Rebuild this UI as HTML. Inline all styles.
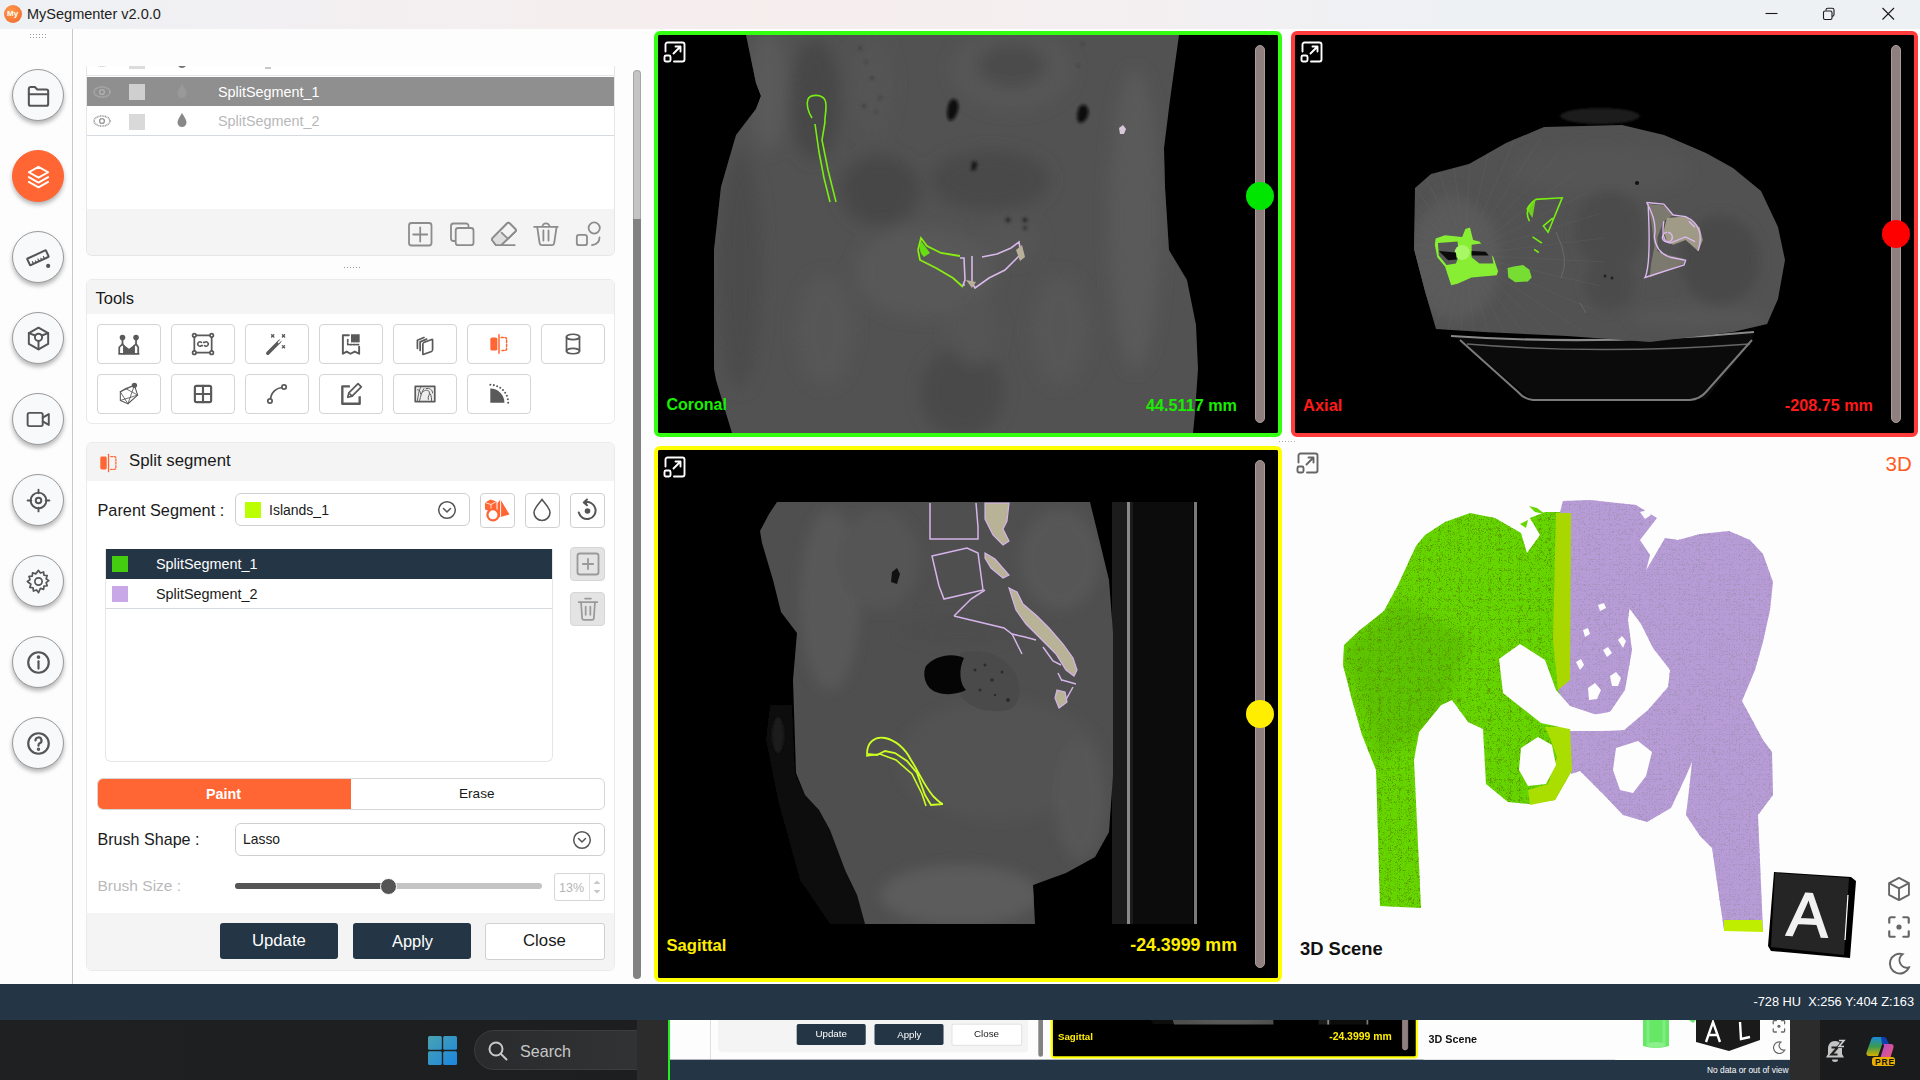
<!DOCTYPE html>
<html><head><meta charset="utf-8">
<style>
*{box-sizing:border-box;margin:0;padding:0}
html,body{width:1920px;height:1080px;overflow:hidden;background:#fff;font-family:"Liberation Sans",sans-serif}
.abs{position:absolute}
#app{position:absolute;left:0;top:0;width:1920px;height:1020px;background:#fdfdfd;overflow:hidden}
#title,.t_title{position:absolute;left:0;top:0;width:1920px;height:29px;background:linear-gradient(90deg,#eef1f4 0%,#f3eff1 20%,#f6eded 40%,#f3eff1 60%,#eef1f4 75%,#eef1f4 100%)}
#sidebar,.t_sidebar{position:absolute;left:0;top:29px;width:73px;height:955px;background:#fdfdfd;border-right:1px solid #c9c9c9}
.sbtn{position:absolute;left:12px;width:52px;height:52px;border-radius:50%;background:#f8f9fb;border:1px solid #9a9a9a;box-shadow:0 3px 4px rgba(0,0,0,.28)}
.sbtn svg{position:absolute;left:11px;top:11px}
.sbtn.on{background:#ff6633;border-color:#ff6633}
#status,.t_status{position:absolute;left:0;top:984px;width:1920px;height:36px;background:#243545}
.vp{position:absolute;background:#000;border:4px solid;border-radius:6px;overflow:hidden}
.panel{position:absolute;left:86px;width:529px;background:#fff;border:1px solid #ececec;border-radius:6px;overflow:hidden}
.phead{position:absolute;left:0;top:0;width:100%;background:#f4f4f4}
.tbtn{position:absolute;width:64px;height:40px;border:1px solid #d4d4d4;border-radius:4px;background:#fff}
.tbtn svg{position:absolute;left:20px;top:8px}
.txt{position:absolute;white-space:nowrap;line-height:1}
</style></head>
<body>
<div id="app">
  <div id="title">
    <div class="abs" style="left:4px;top:5px;width:18px;height:18px;border-radius:50%;background:radial-gradient(circle at 40% 35%,#ff9a4a,#f0632a)"></div>
    <div class="txt" style="left:7px;top:10px;font-size:8px;font-weight:bold;color:#fff">My</div>
    <div class="txt" style="left:27px;top:7px;font-size:14.5px;color:#222">MySegmenter v2.0.0</div>
    <svg class="abs" style="left:1760px;top:4px" width="140" height="22" viewBox="1760 4 140 22" fill="none" stroke="#1a1a1a" stroke-width="1.1"><path d="M1765.5 13.5H1777.5"/><rect x="1823.5" y="11" width="8.5" height="8.5" rx="1.5"/><path d="M1826 10.5V10a1.8 1.8 0 0 1 1.8-1.8h4.4a1.8 1.8 0 0 1 1.8 1.8v4.4a1.8 1.8 0 0 1-1.8 1.8H1832"/><path d="M1882.5 8L1894 19.5M1894 8L1882.5 19.5"/></svg>
  </div>
  <div id="sidebar"><div class="abs" style="left:29px;top:4px;width:18px;height:6px;background-image:radial-gradient(circle,#999 0.6px,transparent 0.9px);background-size:3px 3px"></div><div class="sbtn" style="top:40px"><svg width="29" height="29" viewBox="0 0 24 24" fill="none" stroke="#555" stroke-width="1.7" stroke-linecap="round" stroke-linejoin="round"><path d="M4 9V6.5a1.5 1.5 0 0 1 1.5-1.5H9l2 2h7.5A1.5 1.5 0 0 1 20 8.5V19a1.5 1.5 0 0 1-1.5 1.5h-13A1.5 1.5 0 0 1 4 19z"/><path d="M4 11h16"/></svg></div><div class="sbtn on" style="top:121px"><svg width="29" height="29" viewBox="0 0 24 24" fill="none" stroke="#fff" stroke-width="1.6" stroke-linecap="round" stroke-linejoin="round"><path d="M12 4l8 4.5-8 4.5-8-4.5z"/><path d="M4 12.5l8 4.5 8-4.5"/><path d="M4 16.5l8 4.5 8-4.5"/></svg></div><div class="sbtn" style="top:202px"><svg width="29" height="29" viewBox="0 0 24 24" fill="none" stroke="#555" stroke-width="1.7" stroke-linecap="round" stroke-linejoin="round"><g transform="rotate(-25 12 12)"><rect x="3" y="9" width="17" height="6" rx="0.5"/><path d="M6 15v-2M8.5 15v-1.5M11 15v-2M13.5 15v-1.5M16 15v-2" stroke-width="1"/></g><circle cx="20" cy="19" r="0.9" fill="#555"/></svg></div><div class="sbtn" style="top:283px"><svg width="29" height="29" viewBox="0 0 24 24" fill="none" stroke="#555" stroke-width="1.6" stroke-linecap="round" stroke-linejoin="round"><path d="M12 3l8 4.5v9L12 21l-8-4.5v-9z"/><circle cx="12" cy="11" r="3"/><path d="M12 14v7M4 7.5l5.3 2M20 7.5l-5.3 2"/></svg></div><div class="sbtn" style="top:364px"><svg width="29" height="29" viewBox="0 0 24 24" fill="none" stroke="#555" stroke-width="1.6" stroke-linecap="round" stroke-linejoin="round"><rect x="3" y="6.5" width="12.5" height="11" rx="1.5"/><path d="M15.5 10.5l5-3v9l-5-3"/></svg></div><div class="sbtn" style="top:445px"><svg width="29" height="29" viewBox="0 0 24 24" fill="none" stroke="#555" stroke-width="1.6" stroke-linecap="round" stroke-linejoin="round"><circle cx="12" cy="12" r="6.5"/><circle cx="12" cy="12" r="2.3"/><path d="M12 3v3M12 18v3M3 12h3M18 12h3"/></svg></div><div class="sbtn" style="top:526px"><svg width="29" height="29" viewBox="0 0 24 24" fill="none" stroke="#555" stroke-width="1.4" stroke-linecap="round" stroke-linejoin="round"><circle cx="12" cy="12" r="3"/><path d="M12 2.8l1.6 2.2 2.6-.9.3 2.7 2.7.3-.9 2.6 2.2 1.6-2.2 1.6.9 2.6-2.7.3-.3 2.7-2.6-.9L12 21.2l-1.6-2.2-2.6.9-.3-2.7-2.7-.3.9-2.6L2.8 12 5 10.4l-.9-2.6 2.7-.3.3-2.7 2.6.9z"/></svg></div><div class="sbtn" style="top:607px"><svg width="29" height="29" viewBox="0 0 24 24" fill="none" stroke="#555" stroke-width="1.8" stroke-linecap="round" stroke-linejoin="round"><circle cx="12" cy="12" r="8.5"/><path d="M12 11v6"/><circle cx="12" cy="7.6" r="0.6" fill="#555"/></svg></div><div class="sbtn" style="top:688px"><svg width="29" height="29" viewBox="0 0 24 24" fill="none" stroke="#555" stroke-width="1.8" stroke-linecap="round" stroke-linejoin="round"><circle cx="12" cy="12" r="8.5"/><path d="M9.5 9.5a2.5 2.5 0 1 1 3.5 2.3c-.7.3-1 .8-1 1.5v.5"/><circle cx="12" cy="16.8" r="0.5" fill="#555"/></svg></div></div>
<div class="abs" style="left:86px;top:66px;width:529px;height:190px;border:1px solid #e6e6e6;border-top:none;border-radius:0 0 6px 6px;background:#fff;overflow:hidden">
<div class="abs" style="left:0;top:-20px;width:528px;height:30px;background:#fff;border-bottom:1px solid #e3e6ea"><div class="abs" style="left:5px;top:8px;"><svg width="20" height="14" viewBox="0 0 20 14"><ellipse cx="10" cy="7" rx="8" ry="5" fill="none" stroke="#bbb" stroke-width="1.6" stroke-dasharray="1 0.6"/><circle cx="10" cy="7" r="2.4" fill="none" stroke="#bbb" stroke-width="1.4"/></svg></div><div class="abs" style="left:42px;top:7px;width:16px;height:16px;background:#dcdcdc"></div><div class="abs" style="left:89px;top:7px"><svg width="12" height="16" viewBox="0 0 12 16"><path d="M6 1C4 4.5 1.5 7.5 1.5 10.5a4.5 4.5 0 0 0 9 0C10.5 7.5 8 4.5 6 1z" fill="#777"/></svg></div><div class="abs" style="left:178px;top:21px;width:6px;height:2px;background:#c8c8c8"></div></div>
<div class="abs" style="left:0;top:11px;width:528px;height:29px;background:#8f8f8f"><div class="abs" style="left:5px;top:8px"><svg width="20" height="14" viewBox="0 0 20 14"><ellipse cx="10" cy="7" rx="8" ry="5" fill="none" stroke="#b0b0b0" stroke-width="1.6" stroke-dasharray="1 0.6"/><circle cx="10" cy="7" r="2.4" fill="none" stroke="#b0b0b0" stroke-width="1.4"/></svg></div><div class="abs" style="left:42px;top:7px;width:16px;height:16px;background:#cfcfcf"></div><div class="abs" style="left:89px;top:6px"><svg width="12" height="16" viewBox="0 0 12 16"><path d="M6 1C4 4.5 1.5 7.5 1.5 10.5a4.5 4.5 0 0 0 9 0C10.5 7.5 8 4.5 6 1z" fill="#999"/></svg></div><div class="txt" style="left:131px;top:7.5px;font-size:14.4px;color:#fff">SplitSegment_1</div></div>
<div class="abs" style="left:0;top:40px;width:528px;height:30px;background:#fff;border-bottom:1px solid #d5dae0"><div class="abs" style="left:5px;top:8px"><svg width="20" height="14" viewBox="0 0 20 14"><ellipse cx="10" cy="7" rx="8" ry="5" fill="none" stroke="#999" stroke-width="1.6" stroke-dasharray="1 0.6"/><circle cx="10" cy="7" r="2.4" fill="none" stroke="#999" stroke-width="1.4"/></svg></div><div class="abs" style="left:42px;top:8px;width:16px;height:16px;background:#d9d9d9"></div><div class="abs" style="left:89px;top:6px"><svg width="12" height="16" viewBox="0 0 12 16"><path d="M6 1C4 4.5 1.5 7.5 1.5 10.5a4.5 4.5 0 0 0 9 0C10.5 7.5 8 4.5 6 1z" fill="#888"/></svg></div><div class="txt" style="left:131px;top:8px;font-size:14.4px;color:#b8b8b8">SplitSegment_2</div></div>
<div class="abs" style="left:0;top:143px;width:528px;height:47px;background:#f4f4f4"><svg class="abs" style="left:307px;top:0" width="220" height="47" viewBox="394 209 220 47" fill="none" stroke="#8c8c8c" stroke-width="1.8" stroke-linecap="round" stroke-linejoin="round">
<rect x="409" y="223" width="22.5" height="22.5" rx="2.5"/><path d="M420.2 227.5v14M413.2 234.5h14"/>
<path d="M455 241h-1.5a2.5 2.5 0 0 1-2.5-2.5v-12.5a2.5 2.5 0 0 1 2.5-2.5h12.5a2.5 2.5 0 0 1 2.5 2.5v2"/><rect x="455.7" y="228" width="17.8" height="17.2" rx="2.5"/>
<path d="M496 245.2L492.4 240.5Q491.5 239 492.7 237.8L507 223.3Q508.4 222 509.8 223.3L515.3 228.8Q516.6 230.2 515.3 231.6L501.2 245.2Z" />
<path d="M492.7 237.8L501.6 232.6 507 237.8 499.5 245.2H496L492.4 240.5Z" fill="#dedede" stroke="none"/>
<path d="M496 245.2L492.4 240.5Q491.5 239 492.7 237.8L507 223.3Q508.4 222 509.8 223.3L515.3 228.8Q516.6 230.2 515.3 231.6L501.2 245.2ZM501.6 232.6L507 237.8M497 245.2H514.7"/>
<path d="M534.2 226.9H557.7M542.4 226.9a3.6 3.6 0 0 1 7.2 0M537.2 226.9L539.6 243a2.5 2.5 0 0 0 2.5 2.2h9.6a2.5 2.5 0 0 0 2.5-2.2L556.6 226.9M543.4 230.5v10M548.5 230.5v10"/>
<circle cx="594.2" cy="228" r="5.6"/><rect x="576.8" y="234.9" width="10.2" height="10.3" rx="2.3"/><path d="M599.5 237.5Q599.5 244 592 245.2"/>
</svg></div>
</div>
<div class="abs" style="left:343px;top:266px;width:18px;height:3px;background-image:radial-gradient(circle,#999 0.6px,transparent 0.9px);background-size:3px 3px"></div>
<div class="abs" style="left:633px;top:70px;width:8px;height:150px;background:#c4c4c4;border:1px solid #a6a6a6;border-bottom:none;border-radius:4px 4px 0 0"></div>
<div class="abs" style="left:633px;top:219px;width:8px;height:760px;background:#828282;border-radius:0 0 4px 4px"></div>
<div class="abs" style="left:86px;top:279px;width:529px;height:145px;border:1px solid #eaeaea;border-radius:6px;background:#fff;overflow:hidden">
<div class="abs" style="left:0;top:0;width:527px;height:34px;background:#f4f4f4"></div>
<div class="txt" style="left:8.5px;top:9.5px;font-size:16.5px;color:#1a1a1a">Tools</div>
<div class="tbtn" style="left:10px;top:44px"><svg style="position:absolute;left:18px;top:6px" width="26" height="26" viewBox="0 0 24 24" fill="none" stroke="#5a5a5a" stroke-width="1.6" stroke-linecap="round" stroke-linejoin="round"><path d="M3 21v-6l3-3 1.5 2V21z" fill="none"/><path d="M7.5 14L12 17.5 16.5 14v7H7.5z" fill="#5a5a5a" stroke="#5a5a5a"/><path d="M16.5 14l2-2 2 3v6h-4z"/><path d="M6 12V7M18.5 12V7" /><circle cx="6" cy="6" r="1.8" fill="#5a5a5a"/><circle cx="18.5" cy="6" r="1.8" fill="#5a5a5a"/><path d="M3 21h18"/></svg></div>
<div class="tbtn" style="left:84px;top:44px"><svg style="position:absolute;left:18px;top:6px" width="26" height="26" viewBox="0 0 24 24" fill="none" stroke="#5a5a5a" stroke-width="1.6" stroke-linecap="round" stroke-linejoin="round"><rect x="4" y="4" width="16" height="16"/><circle cx="4" cy="4" r="1.6" fill="#fff"/><circle cx="20" cy="4" r="1.6" fill="#fff"/><circle cx="4" cy="20" r="1.6" fill="#fff"/><circle cx="20" cy="20" r="1.6" fill="#fff"/><path d="M10.5 10.5a2 2 0 1 0 0 3h1M13.5 13.5a2 2 0 1 0 0-3h-1" stroke-width="1.4"/></svg></div>
<div class="tbtn" style="left:158px;top:44px"><svg style="position:absolute;left:18px;top:6px" width="26" height="26" viewBox="0 0 24 24" fill="none" stroke="#5a5a5a" stroke-width="1.6" stroke-linecap="round" stroke-linejoin="round"><path d="M3.5 20.5l11-11" stroke-width="3.2"/><path d="M13.5 10.5l2-2" stroke="#fff" stroke-width="1.4"/><path d="M7 3.5l2 2M9 3.5l-2 2M17 3.5l2 2M19 3.5l-2 2M17 13.5l2 2M19 13.5l-2 2" stroke-width="1.3"/></svg></div>
<div class="tbtn" style="left:232px;top:44px"><svg style="position:absolute;left:18px;top:6px" width="26" height="26" viewBox="0 0 24 24" fill="none" stroke="#5a5a5a" stroke-width="1.6" stroke-linecap="round" stroke-linejoin="round"><rect x="12" y="3" width="8" height="7.5" fill="#5a5a5a" stroke="none"/><path d="M10 4H4.5v17l3.5-2 3.5 2 4-2 4 2v-6.5" stroke-width="1.8"/><path d="M9 8v4.5h10" stroke-dasharray="1.8 1.4" stroke-width="1.6"/></svg></div>
<div class="tbtn" style="left:306px;top:44px"><svg style="position:absolute;left:18px;top:6px" width="26" height="26" viewBox="0 0 24 24" fill="none" stroke="#5a5a5a" stroke-width="1.6" stroke-linecap="round" stroke-linejoin="round"><path d="M5 16V8.5l6-2.5"/><path d="M7.5 18V10l6-2.5"/><rect x="10" y="9.5" width="9" height="11" rx="1.2" transform="skewY(-20) translate(0 5)"/></svg></div>
<div class="tbtn" style="left:380px;top:44px"><svg style="position:absolute;left:18px;top:6px" width="26" height="26" viewBox="0 0 24 24" fill="none" stroke="#5a5a5a" stroke-width="1.6" stroke-linecap="round" stroke-linejoin="round"><rect x="4" y="6" width="6.5" height="12" rx="1.5" fill="#ff6633" stroke="none"/><path d="M12 3.5v17" stroke="#ff6633" stroke-width="1.4"/><path d="M14 6h3.5a1.5 1.5 0 0 1 1.5 1.5v9a1.5 1.5 0 0 1-1.5 1.5H14" stroke="#ff6633" stroke-width="1.4" stroke-dasharray="2 1.5"/></svg></div>
<div class="tbtn" style="left:454px;top:44px"><svg style="position:absolute;left:18px;top:6px" width="26" height="26" viewBox="0 0 24 24" fill="none" stroke="#5a5a5a" stroke-width="1.6" stroke-linecap="round" stroke-linejoin="round"><ellipse cx="12" cy="5.5" rx="6" ry="2.5"/><ellipse cx="12" cy="18.5" rx="6" ry="2.5"/><path d="M6 5.5v13M18 5.5v13"/></svg></div>
<div class="tbtn" style="left:10px;top:94px"><svg style="position:absolute;left:18px;top:6px" width="26" height="26" viewBox="0 0 24 24" fill="none" stroke="#5a5a5a" stroke-width="1.6" stroke-linecap="round" stroke-linejoin="round"><path d="M4 10l5-3 8-3 3 9-9 8-7-3z" stroke-width="1"/><path d="M4 10l13-6M9 7l11 6M4 18l16-5M11 21l6-17M4 10l7 11" stroke-width="0.8"/><circle cx="17" cy="4" r="1.7" fill="#5a5a5a"/></svg></div>
<div class="tbtn" style="left:84px;top:94px"><svg style="position:absolute;left:18px;top:6px" width="26" height="26" viewBox="0 0 24 24" fill="none" stroke="#5a5a5a" stroke-width="1.6" stroke-linecap="round" stroke-linejoin="round"><rect x="4.5" y="4.5" width="15" height="15" rx="1.5" stroke-width="2"/><path d="M12 4.5v15M4.5 12h15" stroke-width="2"/></svg></div>
<div class="tbtn" style="left:158px;top:94px"><svg style="position:absolute;left:18px;top:6px" width="26" height="26" viewBox="0 0 24 24" fill="none" stroke="#5a5a5a" stroke-width="1.6" stroke-linecap="round" stroke-linejoin="round"><path d="M6 18C6 11 11 6 18 6"/><circle cx="5.5" cy="18.5" r="2" fill="#fff"/><circle cx="18.5" cy="5.5" r="2" fill="#fff"/></svg></div>
<div class="tbtn" style="left:232px;top:94px"><svg style="position:absolute;left:18px;top:6px" width="26" height="26" viewBox="0 0 24 24" fill="none" stroke="#5a5a5a" stroke-width="1.6" stroke-linecap="round" stroke-linejoin="round"><path d="M11 5H4v16h16v-7" stroke-width="2.2" stroke-linecap="butt"/><path d="M9 15l1-4 8.5-8.5 3 3L13 14z"/><path d="M11 12l2 2"/></svg></div>
<div class="tbtn" style="left:306px;top:94px"><svg style="position:absolute;left:18px;top:6px" width="26" height="26" viewBox="0 0 24 24" fill="none" stroke="#5a5a5a" stroke-width="1.6" stroke-linecap="round" stroke-linejoin="round"><rect x="3" y="5" width="18" height="14" fill="#eee" stroke="#5a5a5a" stroke-width="1.6"/><path d="M5 18c1-5 1-9 3-12M7 18c1-4 2-8 4-11M13 7c3-1 6 1 6 4M10 10c2-2 5-2 6 0 1 3-2 4-1 7M17 12c1 2 1 4 1 6M5 8c2 0 3 2 3 4" stroke-width="0.9"/></svg></div>
<div class="tbtn" style="left:380px;top:94px"><svg style="position:absolute;left:18px;top:6px" width="26" height="26" viewBox="0 0 24 24" fill="none" stroke="#5a5a5a" stroke-width="1.6" stroke-linecap="round" stroke-linejoin="round"><path d="M4 7a13 13 0 0 1 13 13H4z" fill="#5a5a5a" stroke="none"/><circle cx="4.00" cy="3.50" r="0.95" fill="#5a5a5a" stroke="none"/><circle cx="7.22" cy="3.82" r="0.95" fill="#5a5a5a" stroke="none"/><circle cx="10.31" cy="4.76" r="0.95" fill="#5a5a5a" stroke="none"/><circle cx="13.17" cy="6.28" r="0.95" fill="#5a5a5a" stroke="none"/><circle cx="15.67" cy="8.33" r="0.95" fill="#5a5a5a" stroke="none"/><circle cx="17.72" cy="10.83" r="0.95" fill="#5a5a5a" stroke="none"/><circle cx="19.24" cy="13.69" r="0.95" fill="#5a5a5a" stroke="none"/><circle cx="20.18" cy="16.78" r="0.95" fill="#5a5a5a" stroke="none"/><circle cx="20.50" cy="20.00" r="0.95" fill="#5a5a5a" stroke="none"/></svg></div>
</div>
<div class="abs" style="left:86px;top:442px;width:529px;height:529px;border:1px solid #eaeaea;border-radius:6px;background:#fff;overflow:hidden">
<div class="abs" style="left:0;top:0;width:527px;height:38px;background:#f4f4f4"></div>
<svg class="abs" style="left:11px;top:9px" width="22" height="22" viewBox="0 0 24 24" fill="none" stroke-linecap="round"><rect x="2.5" y="5" width="7" height="14" rx="1.5" fill="#ff6633"/><path d="M11.5 2.5v19" stroke="#ff6633" stroke-width="1.4"/><path d="M14 5h4a1.5 1.5 0 0 1 1.5 1.5v11A1.5 1.5 0 0 1 18 19h-4" stroke="#ff6633" stroke-width="1.4" stroke-dasharray="2 1.6"/></svg>
<div class="txt" style="left:42px;top:10px;font-size:16.8px;color:#1a1a1a">Split segment</div>
<div class="txt" style="left:10.5px;top:59px;font-size:16.3px;color:#1a1a1a">Parent Segment :</div>
<div class="abs" style="left:148px;top:50px;width:235px;height:33px;border:1px solid #cfcfcf;border-radius:6px;background:#fff"><div class="abs" style="left:9px;top:8px;width:16px;height:16px;background:#bbff00"></div><div class="txt" style="left:33px;top:9px;font-size:14px;color:#1a1a1a">Islands_1</div><div class="abs" style="left:201px;top:6px"><svg width="20" height="20" viewBox="0 0 20 20" fill="none" stroke="#555" stroke-width="1.5" stroke-linecap="round" stroke-linejoin="round"><circle cx="10" cy="10" r="8.3"/><path d="M6.5 8.5L10 12l3.5-3.5"/></svg></div></div>
<div class="abs" style="left:393px;top:50px;width:35px;height:35px;border:1px solid #d0d0d0;border-radius:4px;background:#fff;overflow:hidden"><div class="abs" style="left:-1px;top:-1px"><svg width="35" height="35" viewBox="0 0 35 35"><path d="M5 9.5L10.5 6.5 16.5 8.5V16L11 18.5 5 16.5z" fill="#ff6633"/><path d="M5 9.5L11 11.5 16.5 8.5M11 11.5V18.5" stroke="#fff" stroke-width="0.8" fill="none"/><path d="M20.5 6.5L29.5 21.5 20.5 24z" fill="#ff6633"/><path d="M17.5 10L20.5 6.5V24L17.5 24.5z" fill="#ff6633"/><path d="M20.6 7V24" stroke="#fff" stroke-width="0.9"/><circle cx="13" cy="21.8" r="5.6" fill="#fff" stroke="#ff6633" stroke-width="2.3"/></svg></div></div>
<div class="abs" style="left:438px;top:50px;width:35px;height:35px;border:1px solid #d0d0d0;border-radius:4px;background:#fff;overflow:hidden"><div class="abs" style="left:-1px;top:-1px"><svg width="35" height="35" viewBox="0 0 35 35" fill="none" stroke="#555" stroke-width="1.6"><path d="M17 6.5C14 10.5 9 15 9 19.5a8 8 0 0 0 16 0C25 15 20 10.5 17 6.5z"/></svg></div></div>
<div class="abs" style="left:483px;top:50px;width:35px;height:35px;border:1px solid #d0d0d0;border-radius:4px;background:#fff;overflow:hidden"><div class="abs" style="left:-1px;top:-1px"><svg width="35" height="35" viewBox="0 0 35 35" fill="none" stroke="#555" stroke-width="2" stroke-linecap="round"><path d="M8.8 19.5A8.5 8.5 0 1 0 15 9.3"/><path d="M17 6.5L13.8 9.5 17 12.3" fill="#555" stroke-linejoin="round"/><circle cx="17.5" cy="18" r="2.8" fill="#555" stroke="none"/></svg></div></div>
<div class="abs" style="left:18px;top:106px;width:448px;height:213px;border:1px solid #e6e6e6;border-top:none;border-radius:0 0 6px 6px;background:#fff;overflow:hidden">
<div class="abs" style="left:0;top:0;width:447px;height:30px;background:#243545"><div class="abs" style="left:6px;top:7px;width:16px;height:16px;background:#44cc11"></div><div class="txt" style="left:50px;top:7.5px;font-size:14.4px;color:#fff">SplitSegment_1</div></div>
<div class="abs" style="left:0;top:30px;width:447px;height:30px;background:#fff;border-bottom:1px solid #d5dae0"><div class="abs" style="left:6px;top:7px;width:16px;height:16px;background:#c8a8e6"></div><div class="txt" style="left:50px;top:8px;font-size:14.4px;color:#1a1a1a">SplitSegment_2</div></div>
</div>
<div class="abs" style="left:483px;top:104px;width:35px;height:34px;border:1px solid #d6d6d6;border-radius:4px;background:#e4e4e4;display:flex;align-items:center;justify-content:center"><svg width="28" height="28" viewBox="0 0 24 24" fill="none" stroke="#9a9a9a" stroke-width="1.6"><rect x="3" y="3" width="18" height="18" rx="2"/><path d="M12 7v10M7 12h10"/></svg></div>
<div class="abs" style="left:483px;top:149px;width:35px;height:34px;border:1px solid #d6d6d6;border-radius:4px;background:#e4e4e4;display:flex;align-items:center;justify-content:center"><svg width="28" height="28" viewBox="0 0 24 24" fill="none" stroke="#9a9a9a" stroke-width="1.5" stroke-linecap="round"><path d="M4 6h16M9.5 3h5M6 6l1 14a1.5 1.5 0 0 0 1.5 1.3h7A1.5 1.5 0 0 0 17 20l1-14M10 10v7M14 10v7"/></svg></div>
<div class="abs" style="left:10px;top:335px;width:508px;height:32px;border:1px solid #d6d6d6;border-radius:6px;background:#fff;overflow:hidden"><div class="abs" style="left:0;top:0;width:253px;height:30px;background:#ff6633"></div><div class="txt" style="left:108px;top:8px;font-size:14.3px;font-weight:bold;color:#fff">Paint</div><div class="txt" style="left:361px;top:8px;font-size:13.6px;color:#1a1a1a">Erase</div></div>
<div class="txt" style="left:10.5px;top:388px;font-size:16.1px;color:#1a1a1a">Brush Shape :</div>
<div class="abs" style="left:148px;top:380px;width:370px;height:33px;border:1px solid #cfcfcf;border-radius:6px;background:#fff"><div class="txt" style="left:7px;top:9px;font-size:13.9px;color:#1a1a1a">Lasso</div><div class="abs" style="left:336px;top:6px"><svg width="20" height="20" viewBox="0 0 20 20" fill="none" stroke="#555" stroke-width="1.5" stroke-linecap="round" stroke-linejoin="round"><circle cx="10" cy="10" r="8.3"/><path d="M6.5 8.5L10 12l3.5-3.5"/></svg></div></div>
<div class="txt" style="left:10.5px;top:435px;font-size:15.5px;color:#b9b9b9">Brush Size :</div>
<div class="abs" style="left:148px;top:440px;width:307px;height:6px;border-radius:3px;background:#c4c4c4"></div><div class="abs" style="left:148px;top:440px;width:154px;height:6px;border-radius:3px;background:#555"></div><div class="abs" style="left:294px;top:436px;width:15px;height:15px;border-radius:50%;background:#555;border:1.5px solid #fff;box-sizing:content-box;margin:-1.5px"></div>
<div class="abs" style="left:467px;top:430px;width:51px;height:28px;border:1px solid #d6d6d6;border-radius:3px;background:#fff"><div class="txt" style="left:4px;top:8px;font-size:12.5px;color:#b5b5b5">13%</div><div class="abs" style="left:34px;top:0;width:1px;height:26px;background:#e0e0e0"></div><svg class="abs" style="left:37px;top:3px" width="10" height="20" viewBox="0 0 10 20"><path d="M1.5 7L5 3.5 8.5 7z M1.5 13L5 16.5 8.5 13z" fill="#c8c8c8"/></svg></div>
<div class="abs" style="left:0;top:470px;width:527px;height:59px;background:#f4f4f4"></div>
<div class="abs" style="left:133px;top:480px;width:118px;height:36px;border-radius:3px;background:#243545"></div><div class="txt" style="left:165px;top:490px;font-size:16.7px;color:#fff">Update</div>
<div class="abs" style="left:266px;top:480px;width:118px;height:36px;border-radius:3px;background:#243545"></div><div class="txt" style="left:305px;top:490px;font-size:16.4px;color:#fff">Apply</div>
<div class="abs" style="left:398px;top:480px;width:120px;height:37px;border:1px solid #d0d0d0;border-radius:3px;background:#fff"></div><div class="txt" style="left:436px;top:490px;font-size:16.8px;color:#1a1a1a">Close</div>
</div>
  <div id="status">
    <div class="txt" style="right:6px;top:12px;font-size:12.8px;color:#fff">-728 HU&nbsp; X:256 Y:404 Z:163</div>
  </div>
  <!-- viewports -->
  <div class="abs" style="left:1278px;top:440px;width:18px;height:3px;background-image:radial-gradient(circle,#aaa 0.6px,transparent 0.9px);background-size:3px 3px"></div>
  <div class="vp" id="vpC" style="left:654px;top:31px;width:628px;height:406px;border-color:#33ff11"><svg class="abs" style="left:0;top:0" width="620" height="398" viewBox="658 35 620 398">
<defs>
<filter id="bl4" x="-50%" y="-50%" width="200%" height="200%"><feGaussianBlur stdDeviation="4"/></filter>
<filter id="bl8" x="-50%" y="-50%" width="200%" height="200%"><feGaussianBlur stdDeviation="8"/></filter>
<filter id="bl2" x="-50%" y="-50%" width="200%" height="200%"><feGaussianBlur stdDeviation="1.5"/></filter>
<clipPath id="cBody"><path d="M746 35H1179L1170 100L1164 148L1165 187L1169 250L1187 280L1196 325L1198 369L1195 413L1193 433H732L725 410L716 380L714 369L714 250L721 187L736 135L756 109L761 96L756 83Z"/></clipPath>
</defs>
<rect x="658" y="35" width="620" height="398" fill="#000"/>
<path d="M746 35H1179L1170 100L1164 148L1165 187L1169 250L1187 280L1196 325L1198 369L1195 413L1193 433H732L725 410L716 380L714 369L714 250L721 187L736 135L756 109L761 96L756 83Z" fill="#525252"/>
<g clip-path="url(#cBody)">
 <g filter="url(#bl8)">
  <ellipse cx="768" cy="90" rx="20" ry="60" fill="#5a5a5a"/>
  <ellipse cx="815" cy="100" rx="25" ry="60" fill="#474747"/>
  <ellipse cx="872" cy="85" rx="20" ry="50" fill="#555"/>
  <ellipse cx="1012" cy="70" rx="60" ry="40" fill="#575757"/>
  <ellipse cx="1012" cy="65" rx="35" ry="22" fill="#4c4c4c"/>
  <ellipse cx="1135" cy="220" rx="25" ry="150" fill="#5a5a5a"/>
  <ellipse cx="740" cy="270" rx="22" ry="120" fill="#4c4c4c"/>
  <ellipse cx="880" cy="190" rx="40" ry="35" fill="#474747"/>
  <ellipse cx="990" cy="180" rx="60" ry="30" fill="#4a4a4a"/>
  <ellipse cx="925" cy="272" rx="70" ry="45" fill="#585858"/>
  <ellipse cx="825" cy="330" rx="28" ry="55" fill="#575757"/>
  <ellipse cx="1060" cy="330" rx="28" ry="55" fill="#565656"/>
  <ellipse cx="962" cy="392" rx="42" ry="45" fill="#494949"/><ellipse cx="968" cy="330" rx="18" ry="28" fill="#595959"/>
  <ellipse cx="975" cy="330" rx="22" ry="35" fill="#555"/>
  <ellipse cx="1010" cy="240" rx="30" ry="20" fill="#555"/>
 </g>
<g filter="url(#bl2)">
  <path d="M951 100c4-3 9 2 7 10s-6 12-9 10-2-16 2-20z" fill="#0a0a0a"/>
  <path d="M1080 106c5-4 10 2 8 9s-8 10-10 6 0-12 2-15z" fill="#0a0a0a"/>
  <path d="M972 162c3-2 6 0 5 4s-4 6-6 4z" fill="#151515"/>
  <circle cx="1008" cy="220" r="2.5" fill="#2a2a2a"/><circle cx="1025" cy="220" r="2.5" fill="#2a2a2a"/><circle cx="1025" cy="228" r="2" fill="#2a2a2a"/>
  <g fill="#3c3c3c"><circle cx="860" cy="48" r="2"/><circle cx="866" cy="62" r="1.5"/><circle cx="872" cy="78" r="2"/><circle cx="864" cy="106" r="2"/><circle cx="876" cy="112" r="1.5"/><circle cx="880" cy="98" r="1.8"/><circle cx="1083" cy="44" r="1.5"/><circle cx="1078" cy="66" r="1.5"/></g>
 </g>
</g>
<!-- segments -->
<path d="M808 99c3-5 14-5 17 1 3 6-1 18 0 22l-3 18 6 30 5 20 3 12M812 118c-4-6-6-14-4-19M815 124l4 28 5 26 6 24" stroke="#77ee11" stroke-width="1.6" fill="none"/>
<path d="M918 250l3-12 6 8 14 7 19 3M918 250l2 10 16 8 17 10 10 9" stroke="#88ee11" stroke-width="1.8" fill="none"/>
<path d="M921 241c-2 5-2 12 3 16l6-4z" fill="#66dd11"/>
<path d="M960 258l4 0 1 22 -2 5 2 0M972 256l0 26 3 6 14-10 16-8 12-12 4-4-2-12-8 6-14 6-15 3" stroke="#d8b8e8" stroke-width="1.6" fill="none"/>
<path d="M1016 250l6-5 3 12-5 4z M966 280l6 8 4-6z" fill="#b8b09a"/>
<path d="M1119 128l4-3 3 4-2 5-4 0z" fill="#d8c8d8"/>
</svg>
<div class="abs" style="left:597px;top:10px;width:10px;height:378px;border-radius:5px;background:#907f7f;border:1px solid #a89c9c"></div>
<div class="abs" style="left:588px;top:147px;width:28px;height:28px;border-radius:50%;background:#00e600"></div>
<div class="txt" style="left:8.5px;top:362px;font-size:16px;font-weight:bold;color:#1aee00">Coronal</div>
<div class="txt" style="right:41px;top:362px;font-size:16.2px;font-weight:bold;color:#1aee00">44.5117 mm</div>
<svg class="abs" style="left:5px;top:5px" width="24" height="24" viewBox="0 0 24 24" fill="none" stroke="#fff" stroke-width="1.9" stroke-linecap="round" stroke-linejoin="round"><path d="M2.5 11.5V4.5a2 2 0 0 1 2-2h15a2 2 0 0 1 2 2v15a2 2 0 0 1-2 2h-8.5"/><rect x="1.5" y="15.5" width="6" height="6" rx="1.5"/><path d="M10.5 13.5l7-7M12.5 6.5h5v5"/></svg></div>
  <div class="vp" id="vpA" style="left:1291px;top:31px;width:627px;height:406px;border-color:#ff3b3b"><svg class="abs" style="left:0;top:0" width="619" height="398" viewBox="1295 35 619 398">
<defs>
<filter id="ab6" x="-50%" y="-50%" width="200%" height="200%"><feGaussianBlur stdDeviation="6"/></filter>
<filter id="ab1" x="-50%" y="-50%" width="200%" height="200%"><feGaussianBlur stdDeviation="1"/></filter>
<clipPath id="aBody"><path d="M1415 188L1431 174L1469 164L1506 143L1544 127L1622 125L1664 135L1706 153L1733 168L1761 191L1778 227L1785 260L1778 299L1767 324L1733 332L1650 342L1567 336L1483 332L1436 329L1425 291L1414 249Z"/></clipPath>
</defs>
<rect x="1295" y="35" width="619" height="398" fill="#000"/>
<ellipse cx="1600" cy="116" rx="40" ry="8" fill="#1a1a1a" filter="url(#ab1)"/>
<path d="M1451 336Q1600 345 1754 332L1752 341L1706 399H1531L1460 340Z" fill="#0b0b0b"/>
<path d="M1451 336Q1600 346 1754 332" stroke="#8a8a8a" stroke-width="2.2" fill="none"/>
<path d="M1467 344Q1600 355 1750 344" stroke="#666" stroke-width="1.5" fill="none"/>
<path d="M1460 340L1518 392Q1524 399 1533 400H1690Q1700 399 1706 392L1752 340" stroke="#7a7a7a" stroke-width="2" fill="none"/>
<path d="M1415 188L1431 174L1469 164L1506 143L1544 127L1622 125L1664 135L1706 153L1733 168L1761 191L1778 227L1785 260L1778 299L1767 324L1733 332L1650 342L1567 336L1483 332L1436 329L1425 291L1414 249Z" fill="#525252"/>
<g clip-path="url(#aBody)">
 <g filter="url(#ab6)">
  <ellipse cx="1600" cy="170" rx="90" ry="25" fill="#555"/>
  <ellipse cx="1610" cy="230" rx="35" ry="40" fill="#4c4c4c"/>
  <ellipse cx="1610" cy="285" rx="25" ry="25" fill="#4b4b4b"/>
  <ellipse cx="1720" cy="260" rx="40" ry="45" fill="#4a4a4a"/>
  <ellipse cx="1700" cy="318" rx="70" ry="10" fill="#575757"/>
  <ellipse cx="1450" cy="250" rx="30" ry="60" fill="#545454"/>
 </g>
 <ellipse cx="1455" cy="260" rx="45" ry="60" fill="#5a5a5a" filter="url(#ab6)"/>
 <g><path d="M1465 255L1605 262" stroke="#6a6a6a" stroke-width="0.8" opacity="0.35"/><path d="M1465 255L1601 286" stroke="#6a6a6a" stroke-width="0.8" opacity="0.35"/><path d="M1465 255L1594 310" stroke="#6a6a6a" stroke-width="0.8" opacity="0.35"/><path d="M1465 255L1582 331" stroke="#6a6a6a" stroke-width="0.8" opacity="0.35"/><path d="M1465 255L1567 350" stroke="#6a6a6a" stroke-width="0.8" opacity="0.35"/><path d="M1465 255L1549 367" stroke="#6a6a6a" stroke-width="0.8" opacity="0.35"/><path d="M1465 255L1529 380" stroke="#6a6a6a" stroke-width="0.8" opacity="0.35"/><path d="M1465 255L1506 389" stroke="#6a6a6a" stroke-width="0.8" opacity="0.35"/><path d="M1465 255L1482 394" stroke="#6a6a6a" stroke-width="0.8" opacity="0.35"/><path d="M1465 255L1458 395" stroke="#6a6a6a" stroke-width="0.8" opacity="0.35"/><path d="M1465 255L1434 391" stroke="#6a6a6a" stroke-width="0.8" opacity="0.35"/><path d="M1465 255L1410 384" stroke="#6a6a6a" stroke-width="0.8" opacity="0.35"/><path d="M1465 255L1389 372" stroke="#6a6a6a" stroke-width="0.8" opacity="0.35"/><path d="M1465 255L1370 357" stroke="#6a6a6a" stroke-width="0.8" opacity="0.35"/><path d="M1465 255L1353 339" stroke="#6a6a6a" stroke-width="0.8" opacity="0.35"/><path d="M1465 255L1340 319" stroke="#6a6a6a" stroke-width="0.8" opacity="0.35"/><path d="M1465 255L1331 296" stroke="#6a6a6a" stroke-width="0.8" opacity="0.35"/><path d="M1465 255L1326 272" stroke="#6a6a6a" stroke-width="0.8" opacity="0.35"/><path d="M1465 255L1325 248" stroke="#6a6a6a" stroke-width="0.8" opacity="0.35"/><path d="M1465 255L1329 224" stroke="#6a6a6a" stroke-width="0.8" opacity="0.35"/><path d="M1465 255L1336 200" stroke="#6a6a6a" stroke-width="0.8" opacity="0.35"/><path d="M1465 255L1348 179" stroke="#6a6a6a" stroke-width="0.8" opacity="0.35"/><path d="M1465 255L1363 160" stroke="#6a6a6a" stroke-width="0.8" opacity="0.35"/><path d="M1465 255L1381 143" stroke="#6a6a6a" stroke-width="0.8" opacity="0.35"/><path d="M1465 255L1401 130" stroke="#6a6a6a" stroke-width="0.8" opacity="0.35"/><path d="M1465 255L1424 121" stroke="#6a6a6a" stroke-width="0.8" opacity="0.35"/><path d="M1465 255L1448 116" stroke="#6a6a6a" stroke-width="0.8" opacity="0.35"/><path d="M1465 255L1472 115" stroke="#6a6a6a" stroke-width="0.8" opacity="0.35"/><path d="M1465 255L1496 119" stroke="#6a6a6a" stroke-width="0.8" opacity="0.35"/><path d="M1465 255L1520 126" stroke="#6a6a6a" stroke-width="0.8" opacity="0.35"/><path d="M1465 255L1541 138" stroke="#6a6a6a" stroke-width="0.8" opacity="0.35"/><path d="M1465 255L1560 153" stroke="#6a6a6a" stroke-width="0.8" opacity="0.35"/><path d="M1465 255L1577 171" stroke="#6a6a6a" stroke-width="0.8" opacity="0.35"/><path d="M1465 255L1590 191" stroke="#6a6a6a" stroke-width="0.8" opacity="0.35"/><path d="M1465 255L1599 214" stroke="#6a6a6a" stroke-width="0.8" opacity="0.35"/><path d="M1465 255L1604 238" stroke="#6a6a6a" stroke-width="0.8" opacity="0.35"/></g>
 <circle cx="1637" cy="183" r="2" fill="#111"/>
 <circle cx="1605" cy="276" r="1.5" fill="#222"/><circle cx="1612" cy="278" r="1.5" fill="#222"/>
 <path d="M1556 232Q1570 260 1561 278M1580 303l6 10" stroke="#6a6a6a" stroke-width="1" fill="none"/>
</g>
<!-- green blob -->
<path d="M1435.6 238.4 L1445.0 235.3 L1462.2 236.9 L1465.3 229.1 L1470.0 227.5 L1473.1 240.0 L1479.4 241.6 L1493.4 257.2 L1498.1 271.2 L1496.6 275.2 L1471.6 277.5 L1457.5 283.8 L1451.2 285.3 L1445.0 266.6 L1437.2 257.2 L1434.8 244.7Z" fill="#88ee33"/>
<path d="M1438.0 243.1 L1457.5 241.6 L1459.1 255.6 L1455.9 263.4 L1446.6 265.0 L1438.8 255.6Z" fill="#575757"/>
<path d="M1471.6 244.7 L1485.6 243.1 L1491.9 255.6 L1493.4 263.4 L1479.4 263.4 L1471.6 257.2Z" fill="#5a5a5a"/>
<circle cx="1462.2" cy="252.5" r="7.5" fill="#a8f866"/>
<path d="M1438.8 250.9 L1455.9 252.5 L1456.7 259.5 L1448.1 260.3Z" fill="#0a0a0a"/>
<path d="M1471.6 250.9 L1485.6 251.7 L1488.8 255.6 L1471.6 255.6Z" fill="#0a0a0a"/>
<path d="M1507.5 268.1 L1513.8 266.6 L1523.1 265.0 L1529.4 269.7 L1531.7 277.5 L1527.8 281.4 L1515.3 282.2 L1508.3 277.5Z" fill="#77dd33"/>
<g stroke="#77ee11" stroke-width="1.6" fill="none">
<path d="M1535.6 199.4 L1562.2 197.8 L1548.1 232.2 L1543.4 225.9 L1552.8 218.1"/>
<path d="M1535.6 199.4 Q1523.1 208.8 1529.4 221.2"/>
<path d="M1532.5 236.9 L1541.9 243.1M1534.1 249.4 L1538.8 252.5"/>
</g>
<path d="M1526.2 208.8 Q1529.4 202.5 1535.6 199.4 L1532.5 218.1Z" fill="#77ee11" opacity="0.8"/>
<path d="M1648.1 204.1 L1663.8 205.6 L1673.1 215.0 L1663.8 221.2 L1657.5 236.9 L1657.5 250.9 L1670.0 255.6 L1684.1 258.8 L1684.1 263.4 L1649.7 277.5 L1651.2 263.4 L1654.4 246.2 L1651.2 221.2Z" fill="#b0aa90" opacity="0.45"/>
<path d="M1666.9 218.1 L1685.6 216.6 L1699.7 227.5 L1702.8 240.0 L1698.1 250.9 L1685.6 240.0 L1673.1 244.7 L1666.9 241.6 L1663.8 230.6Z" fill="#b4ae94" opacity="0.8"/>
<g stroke="#dcb8ee" stroke-width="1.4" fill="none">
<path d="M1646.6 202.5 L1663.8 204.1 L1673.1 215.0 L1685.6 216.6 Q1705.9 225.9 1698.1 250.9"/>
<path d="M1646.6 202.5 Q1657.5 221.2 1654.4 236.9 Q1655.9 252.5 1670.0 257.2 L1685.6 260.3 L1684.1 265.0 L1645.0 277.5 Q1651.2 265.0 1648.1 204.1"/>
<path d="M1663.8 221.2 Q1660.6 241.6 1670.0 243.1 L1685.6 236.9 L1695.0 241.6"/>
<path d="M1666.9 232.2 a5 5 0 1 0 1 0M1688.8 221.2 l6 6"/>
</g>
</svg>
<div class="abs" style="left:596px;top:10px;width:10px;height:378px;border-radius:5px;background:#907f7f;border:1px solid #a89c9c"></div>
<div class="abs" style="left:587px;top:185px;width:28px;height:28px;border-radius:50%;background:#ff0000"></div>
<div class="txt" style="left:8px;top:362px;font-size:16.5px;font-weight:bold;color:#ff1a1a">Axial</div>
<div class="txt" style="right:41px;top:362px;font-size:16.2px;font-weight:bold;color:#ff1a1a">-208.75 mm</div>
<svg class="abs" style="left:5px;top:5px" width="24" height="24" viewBox="0 0 24 24" fill="none" stroke="#fff" stroke-width="1.9" stroke-linecap="round" stroke-linejoin="round"><path d="M2.5 11.5V4.5a2 2 0 0 1 2-2h15a2 2 0 0 1 2 2v15a2 2 0 0 1-2 2h-8.5"/><rect x="1.5" y="15.5" width="6" height="6" rx="1.5"/><path d="M10.5 13.5l7-7M12.5 6.5h5v5"/></svg></div>
  <div class="vp" id="vpS" style="left:654px;top:446px;width:628px;height:536px;border-color:#ffff00"><svg class="abs" style="left:0;top:0" width="620" height="528" viewBox="658 450 620 528">
<defs>
<filter id="sb6" x="-50%" y="-50%" width="200%" height="200%"><feGaussianBlur stdDeviation="6"/></filter>
<filter id="sb1" x="-50%" y="-50%" width="200%" height="200%"><feGaussianBlur stdDeviation="1"/></filter>
<clipPath id="sBody"><path d="M777 502H1090L1099 539L1109 580L1113 633L1113 775L1109 832L1095 857L1066 873L1033 885L1035 924H865L857 895L845 870L830 830L819 810L805 795L796 773L793 680L797 633L781 612L773 580L762 543L760 531L769 514Z"/></clipPath>
</defs>
<rect x="658" y="450" width="620" height="528" fill="#000"/>
<path d="M770 705L792 705L795 773L805 795L819 810L830 830L845 870L857 895L865 924H830L800 880L778 800L766 740Z" fill="#0d0d0d" filter="url(#sb1)"/><ellipse cx="778" cy="735" rx="6" ry="18" fill="#1c1c1c" filter="url(#sb1)"/>
<rect x="1112" y="502" width="21" height="422" fill="#1c1c1c"/>
<rect x="1127" y="502" width="3" height="422" fill="#8a8a8a"/>
<rect x="1133" y="502" width="60" height="422" fill="#0c0c0c"/>
<rect x="1194" y="502" width="3" height="422" fill="#7a7a7a"/>
<path d="M777 502H1090L1099 539L1109 580L1113 633L1113 775L1109 832L1095 857L1066 873L1033 885L1035 924H865L857 895L845 870L830 830L819 810L805 795L796 773L793 680L797 633L781 612L773 580L762 543L760 531L769 514Z" fill="#4f4f4f"/>
<g clip-path="url(#sBody)">
 <g filter="url(#sb6)">
  <ellipse cx="830" cy="600" rx="30" ry="90" fill="#585858"/>
  <ellipse cx="880" cy="560" rx="40" ry="50" fill="#545454"/>
  <ellipse cx="1060" cy="560" rx="40" ry="50" fill="#565656"/>
  <ellipse cx="1000" cy="760" rx="100" ry="60" fill="#535353"/>
  <ellipse cx="960" cy="895" rx="80" ry="30" fill="#5c5c5c"/>
  <ellipse cx="1080" cy="800" rx="25" ry="60" fill="#575757"/>
  <ellipse cx="960" cy="630" rx="60" ry="15" fill="#4d4d4d"/>
 </g>
 <path d="M960 653c20-6 45 2 55 20 8 16 5 30-5 36-18 6-40 0-50-14z" fill="#4a4a4a"/>
 <g fill="#2c2c2c"><circle cx="975" cy="670" r="1.5"/><circle cx="985" cy="665" r="1.5"/><circle cx="992" cy="680" r="1.8"/><circle cx="1002" cy="672" r="1.5"/><circle cx="980" cy="690" r="1.5"/><circle cx="1008" cy="700" r="2"/><circle cx="995" cy="695" r="1.3"/></g>
 <path d="M964 658c-12-6-30-2-38 8-4 8-1 22 10 26 10 4 22 2 30-2-6-6-8-20-2-32z" fill="#050505"/>
 <path d="M892 572l5-4 3 6-3 10-6-2z" fill="#111"/>
 
</g>
<g stroke="#d6b4ea" stroke-width="1.5" fill="none">
 <path d="M930 503V539H978V527L976 503"/>
 <path d="M932 556L967 548L978 553L983 590L944 599L939 586Z"/>
 <path d="M954 616L971 599L985 590M954 616L1004 628L1012 634L1025 637L1036 640"/>
 <path d="M1012 634l6 12 4 8M1043 647l10 14 8 4M1058 673l4 8M1062 680l14 4"/>
 <path d="M1063 705l10-18"/>
</g>
<g fill="#b8b296" stroke="#d6b4ea" stroke-width="1.2">
 <path d="M985 503h24l-2 18-4 8 6 12-6 4-10-10-8-16z"/>
 <path d="M985 553l10 6 14 16-6 3-12-10-6-10z"/>
 <path d="M1009 588l8 4 6 12 14 12 12 12 14 16 10 14 4 12-3 6-8-6-10-16-16-16-14-14-10-14z"/>
 <path d="M1057 690l8 2 2 10-8 6-4-10z"/>
</g>
<path d="M867 754c0-12 8-18 18-16 10 2 20 10 26 22 8 12 12 24 22 36 6 6 8 8 10 8l-12 1-6-10-8-22-10-12-12-8-10-2-8 4z" stroke="#ccff22" stroke-width="1.8" fill="none"/>
<path d="M866 756l14-2 16 6 16 14 10 20 4 12" stroke="#ccff22" stroke-width="1.6" fill="none"/>
</svg>
<div class="abs" style="left:597px;top:10px;width:10px;height:508px;border-radius:5px;background:#907f7f;border:1px solid #a89c9c"></div>
<div class="abs" style="left:588px;top:250px;width:28px;height:28px;border-radius:50%;background:#ffee00"></div>
<div class="txt" style="left:8.5px;top:488px;font-size:16.6px;font-weight:bold;color:#ffee00">Sagittal</div>
<div class="txt" style="right:41px;top:487px;font-size:17.8px;font-weight:bold;color:#ffee00">-24.3999 mm</div>
<svg class="abs" style="left:5px;top:5px" width="24" height="24" viewBox="0 0 24 24" fill="none" stroke="#fff" stroke-width="1.9" stroke-linecap="round" stroke-linejoin="round"><path d="M2.5 11.5V4.5a2 2 0 0 1 2-2h15a2 2 0 0 1 2 2v15a2 2 0 0 1-2 2h-8.5"/><rect x="1.5" y="15.5" width="6" height="6" rx="1.5"/><path d="M10.5 13.5l7-7M12.5 6.5h5v5"/></svg></div>
  <div class="abs" id="vp3" style="left:1291px;top:446px;width:629px;height:538px;background:#fdfdfd"><svg class="abs" style="left:0;top:0" width="629" height="538" viewBox="1291 446 629 538">
<defs>
<filter id="texG" x="0" y="0" width="100%" height="100%"><feTurbulence type="turbulence" baseFrequency="0.45" numOctaves="2" seed="4" result="n"/><feColorMatrix in="n" type="matrix" values="0 0 0 0 0.1  0 0 0 0 0.25  0 0 0 0 0  -5 0 0 0 0.95" result="d"/><feComposite in="d" in2="SourceGraphic" operator="in" result="di"/><feMerge><feMergeNode in="SourceGraphic"/><feMergeNode in="di"/></feMerge></filter>
<filter id="texP" x="0" y="0" width="100%" height="100%"><feTurbulence type="turbulence" baseFrequency="0.3 0.8" numOctaves="2" seed="7" result="n"/><feColorMatrix in="n" type="matrix" values="0 0 0 0 0.35  0 0 0 0 0.28  0 0 0 0 0.45  -5 0 0 0 0.95" result="d"/><feComposite in="d" in2="SourceGraphic" operator="in" result="di"/><feMerge><feMergeNode in="SourceGraphic"/><feMergeNode in="di"/></feMerge></filter>
</defs>
<clipPath id="gclip"><path d="M1380 906 L1421 908 L1414 760 L1419 732 L1441 705 L1452 700 L1468 722 L1483 729 L1486 784 L1508 802 L1530 804 L1555 800 L1571 772 L1569 731 L1560 512 L1545 512 L1530 518 L1540 535 L1527 553 L1521 533 L1495 518 L1470 513 L1445 522 L1425 535 L1416 546 L1398 585 L1384 611 L1360 630 L1344 645 L1343 665 L1352 700 L1362 735 L1376 770Z"/></clipPath><g filter="url(#texG)">
<path d="M1380 906 L1421 908 L1414 760 L1419 732 L1441 705 L1452 700 L1468 722 L1483 729 L1486 784 L1508 802 L1530 804 L1555 800 L1571 772 L1569 731 L1560 512 L1545 512 L1530 518 L1540 535 L1527 553 L1521 533 L1495 518 L1470 513 L1445 522 L1425 535 L1416 546 L1398 585 L1384 611 L1360 630 L1344 645 L1343 665 L1352 700 L1362 735 L1376 770Z" fill="#66d600"/>
<g clip-path="url(#gclip)"><path d="M1343 650L1400 600L1470 640L1440 720L1380 760Z" fill="#5cc400" style="filter:blur(6px)"/></g>
</g>
<g filter="url(#texP)">
<path d="M1560 512 L1563 501 L1590 500 L1636 505 L1657 518 L1640 540 L1650 555 L1645 575 L1632 590 L1628 620 L1632 650 L1625 690 L1610 712 L1585 716 L1565 706 L1558 690Z" fill="#b89cd8"/>
<path d="M1665 538 L1678 540 L1700 534 L1729 531 L1750 540 L1763 554 L1773 582 L1770 610 L1763 642 L1755 670 L1742 701 L1763 740 L1772 752 L1773 795 L1758 815 L1763 931 L1724 930 L1712 848 L1700 836 L1686 815 L1689 790 L1692 762 L1686 776 L1671 808 L1647 822 L1623 815 L1604 795 L1580 771 L1571 774 L1569 731 L1597 731 L1624 730 L1648 710 L1668 687 L1670 670 L1653 648 L1641 624 L1627 605 L1630 586 L1641 579Z" fill="#b89cd8"/>
</g>
<path d="M1545 727 L1570 727 L1572 770 L1555 800 L1530 805 L1528 790 L1548 784 L1557 757 L1550 738Z" fill="#aadd00"/>
<path d="M1556 513 L1571 513 L1570 680 L1558 690 L1553 640Z" fill="#a8d800"/>
<path d="M1724 920 L1762 920 L1763 932 L1724 931Z" fill="#c0ee00"/>
<path d="M1499 659 L1520 644 L1545 660 L1556 690 L1570 706 L1600 716 L1632 702 L1648 708 L1624 730 L1597 731 L1569 729 L1541 723 L1503 693Z" fill="#fdfdfd"/>
<path d="M1521 748 L1538 737 L1552 745 L1556 765 L1546 784 L1528 786 L1519 770Z" fill="#fdfdfd"/>
<path d="M1616 748 L1638 741 L1652 752 L1646 776 L1633 793 L1620 790 L1613 770Z" fill="#fdfdfd"/>
<g fill="#fdfdfd"><path d="M1588 688l7-5 6 7-4 9-8 1z"/><path d="M1610 676l6-4 5 6-3 8-6 0z"/><path d="M1576 662l5-3 3 6-4 5z"/><path d="M1603 650l5-3 4 6-5 4z"/><path d="M1618 640l4-4 4 5-3 7z"/><path d="M1583 630l5-2 2 6-5 3z"/><path d="M1598 605l6-2 2 5-6 3z"/><path d="M1640 512l8-2 3 5-6 4z"/></g>
<g fill="#66d600"><path d="M1535 512l-6 -6 8 2 8 6z"/><path d="M1528 520l-8 4 6 4z"/></g>
<path d="M1774 872L1851 877L1856 881L1850 958L1771 951L1768 946Z" fill="#000"/>
<path d="M1775 873L1849 878L1844 955L1771 947Z" fill="#252525"/>
<path d="M1848 895L1845 940" stroke="#fff" stroke-width="1.2"/>
<text x="1808" y="936" font-family="Liberation Sans" font-size="62" fill="#f2f2f2" stroke="#f2f2f2" stroke-width="1.6" text-anchor="middle" transform="rotate(3 1808 910)">A</text>
</svg>
<svg class="abs" style="left:5px;top:5px" width="24" height="24" viewBox="0 0 24 24" fill="none" stroke="#666" stroke-width="1.9" stroke-linecap="round" stroke-linejoin="round"><path d="M2.5 11.5V4.5a2 2 0 0 1 2-2h15a2 2 0 0 1 2 2v15a2 2 0 0 1-2 2h-8.5"/><rect x="1.5" y="15.5" width="6" height="6" rx="1.5"/><path d="M10.5 13.5l7-7M12.5 6.5h5v5"/></svg>
<div class="txt" style="left:594.5px;top:8px;font-size:20.5px;color:#ff5a22">3D</div>
<div class="txt" style="left:9px;top:494px;font-size:18.4px;font-weight:bold;color:#111">3D Scene</div>
<svg class="abs" style="left:594px;top:429px" width="28" height="28" viewBox="0 0 24 24" fill="none" stroke="#666" stroke-width="1.6" stroke-linejoin="round"><path d="M12 2.5l8.5 4.5v10L12 21.5 3.5 17V7z"/><path d="M3.5 7L12 11.5 20.5 7M12 11.5v10"/></svg>
<svg class="abs" style="left:595px;top:468px" width="26" height="26" viewBox="0 0 24 24" fill="none" stroke="#666" stroke-width="2" stroke-linecap="round"><path d="M3 8V4.5A1.5 1.5 0 0 1 4.5 3H8M16 3h3.5A1.5 1.5 0 0 1 21 4.5V8M21 16v3.5a1.5 1.5 0 0 1-1.5 1.5H16M8 21H4.5A1.5 1.5 0 0 1 3 19.5V16"/><circle cx="12" cy="12" r="2.4" fill="#666" stroke="none"/></svg>
<svg class="abs" style="left:594px;top:504px" width="28" height="28" viewBox="0 0 24 24" fill="none" stroke="#666" stroke-width="1.7" stroke-linecap="round"><path d="M15 3.5A8.5 8.5 0 1 0 20.5 15 6.5 6.5 0 0 1 15 3.5z"/></svg></div>
</div>
<div id="taskbar" class="abs" style="left:0;top:1020px;width:1920px;height:60px;background:linear-gradient(90deg,#1e2022 0%,#1b1d1f 50%,#191b1d 100%)">
  <svg class="abs" style="left:428px;top:16px" width="29" height="29" viewBox="0 0 29 29"><defs><linearGradient id="wg" gradientUnits="userSpaceOnUse" x1="0" y1="0" x2="29" y2="29"><stop offset="0" stop-color="#4aa3b0"/><stop offset="1" stop-color="#1a86e0"/></linearGradient></defs><rect x="0" y="0" width="13.8" height="13.8" rx="1.5" fill="url(#wg)"/><rect x="15.2" y="0" width="13.8" height="13.8" rx="1.5" fill="url(#wg)"/><rect x="0" y="15.2" width="13.8" height="13.8" rx="1.5" fill="url(#wg)"/><rect x="15.2" y="15.2" width="13.8" height="13.8" rx="1.5" fill="url(#wg)"/></svg>
  <div class="abs" style="left:474px;top:10px;width:200px;height:40px;border-radius:20px;background:linear-gradient(90deg,#2a2b2d,#333436);border:1px solid #3c3d3f"></div>
  <svg class="abs" style="left:487px;top:20px" width="22" height="22" viewBox="0 0 22 22" fill="none" stroke="#c8c8c8" stroke-width="2" stroke-linecap="round"><circle cx="9" cy="9" r="6.5"/><path d="M14 14l5.5 5.5"/></svg>
  <div class="txt" style="left:520px;top:23px;font-size:16.1px;color:#c8c8c8">Search</div>
  <div class="abs" style="left:637px;top:0;width:33px;height:60px;background:#2c2c2c"></div>
  <div class="abs" style="left:1790px;top:0;width:30px;height:60px;background:#2c2c2c"></div>
  <svg class="abs" style="left:1824px;top:18px" width="24" height="26" viewBox="0 0 24 26"><path d="M11 3c-4.5 0-7 3.5-7 8v5l-2 3.5h18L18 16v-5c0-4.5-2.5-8-7-8z" fill="#c4c4c4"/><path d="M8 21.5a3 2.5 0 0 0 6 0z" fill="#c4c4c4"/><path d="M7.5 9.5h6l-6 7h6" stroke="#222" stroke-width="2.2" fill="none"/><path d="M15 2.5h5l-5 6h5" stroke="#1c1e20" stroke-width="3.2" fill="none"/><path d="M15 2.5h5l-5 6h5" stroke="#d0d0d0" stroke-width="1.6" fill="none"/></svg>
  <svg class="abs" style="left:1864px;top:15px" width="34" height="32" viewBox="0 0 34 32"><defs><linearGradient id="cpa" x1="0" y1="0" x2="0" y2="1"><stop offset="0" stop-color="#1a8ad8"/><stop offset=".5" stop-color="#3a9a50"/><stop offset="1" stop-color="#d8b000"/></linearGradient><linearGradient id="cpb" x1="0" y1="0" x2="1" y2="1"><stop offset="0" stop-color="#b04ad0"/><stop offset="1" stop-color="#f05a70"/></linearGradient></defs><path d="M10 2h9c1 0 1.5 1 1 2L14 21H5c-2 0-3-1.5-2.5-3.5L7 5c.5-2 1.5-3 3-3z" fill="url(#cpa)"/><path d="M17 2h3c1.5 0 2.5 1 3 3l2 4h-7z" fill="#1040b0"/><path d="M17 9h10c2 0 3 1.5 2.5 3.5L26 24H16l4-13c.5-1.5-1-2-3-2z" fill="url(#cpb)"/><rect x="8" y="22" width="23" height="9" rx="3" fill="#e8b000"/><text x="11" y="30" font-family="Liberation Sans" font-weight="bold" font-size="8.5" fill="#111" letter-spacing="0.8">PRE</text></svg>
  <div class="abs" style="left:670px;top:0;width:1120px;height:60px;overflow:hidden">
<div style="position:absolute;left:-2px;top:-535.6px;width:1920px;height:1020px;transform:scale(0.585);transform-origin:0 0">
<div class="app2" style="position:absolute;left:0;top:0;width:1920px;height:1020px;background:#fdfdfd;overflow:hidden">
  <div class="t_title">
    <div class="abs" style="left:4px;top:5px;width:18px;height:18px;border-radius:50%;background:radial-gradient(circle at 40% 35%,#ff9a4a,#f0632a)"></div>
    <div class="txt" style="left:7px;top:10px;font-size:8px;font-weight:bold;color:#fff">My</div>
    <div class="txt" style="left:27px;top:7px;font-size:14.5px;color:#222">MySegmenter v2.0.0</div>
    <svg class="abs" style="left:1760px;top:4px" width="140" height="22" viewBox="1760 4 140 22" fill="none" stroke="#1a1a1a" stroke-width="1.1"><path d="M1765.5 13.5H1777.5"/><rect x="1823.5" y="11" width="8.5" height="8.5" rx="1.5"/><path d="M1826 10.5V10a1.8 1.8 0 0 1 1.8-1.8h4.4a1.8 1.8 0 0 1 1.8 1.8v4.4a1.8 1.8 0 0 1-1.8 1.8H1832"/><path d="M1882.5 8L1894 19.5M1894 8L1882.5 19.5"/></svg>
  </div>
  <div class="t_sidebar"><div class="abs" style="left:29px;top:4px;width:18px;height:6px;background-image:radial-gradient(circle,#999 0.6px,transparent 0.9px);background-size:3px 3px"></div><div class="sbtn" style="top:40px"><svg width="29" height="29" viewBox="0 0 24 24" fill="none" stroke="#555" stroke-width="1.7" stroke-linecap="round" stroke-linejoin="round"><path d="M4 9V6.5a1.5 1.5 0 0 1 1.5-1.5H9l2 2h7.5A1.5 1.5 0 0 1 20 8.5V19a1.5 1.5 0 0 1-1.5 1.5h-13A1.5 1.5 0 0 1 4 19z"/><path d="M4 11h16"/></svg></div><div class="sbtn on" style="top:121px"><svg width="29" height="29" viewBox="0 0 24 24" fill="none" stroke="#fff" stroke-width="1.6" stroke-linecap="round" stroke-linejoin="round"><path d="M12 4l8 4.5-8 4.5-8-4.5z"/><path d="M4 12.5l8 4.5 8-4.5"/><path d="M4 16.5l8 4.5 8-4.5"/></svg></div><div class="sbtn" style="top:202px"><svg width="29" height="29" viewBox="0 0 24 24" fill="none" stroke="#555" stroke-width="1.7" stroke-linecap="round" stroke-linejoin="round"><g transform="rotate(-25 12 12)"><rect x="3" y="9" width="17" height="6" rx="0.5"/><path d="M6 15v-2M8.5 15v-1.5M11 15v-2M13.5 15v-1.5M16 15v-2" stroke-width="1"/></g><circle cx="20" cy="19" r="0.9" fill="#555"/></svg></div><div class="sbtn" style="top:283px"><svg width="29" height="29" viewBox="0 0 24 24" fill="none" stroke="#555" stroke-width="1.6" stroke-linecap="round" stroke-linejoin="round"><path d="M12 3l8 4.5v9L12 21l-8-4.5v-9z"/><circle cx="12" cy="11" r="3"/><path d="M12 14v7M4 7.5l5.3 2M20 7.5l-5.3 2"/></svg></div><div class="sbtn" style="top:364px"><svg width="29" height="29" viewBox="0 0 24 24" fill="none" stroke="#555" stroke-width="1.6" stroke-linecap="round" stroke-linejoin="round"><rect x="3" y="6.5" width="12.5" height="11" rx="1.5"/><path d="M15.5 10.5l5-3v9l-5-3"/></svg></div><div class="sbtn" style="top:445px"><svg width="29" height="29" viewBox="0 0 24 24" fill="none" stroke="#555" stroke-width="1.6" stroke-linecap="round" stroke-linejoin="round"><circle cx="12" cy="12" r="6.5"/><circle cx="12" cy="12" r="2.3"/><path d="M12 3v3M12 18v3M3 12h3M18 12h3"/></svg></div><div class="sbtn" style="top:526px"><svg width="29" height="29" viewBox="0 0 24 24" fill="none" stroke="#555" stroke-width="1.4" stroke-linecap="round" stroke-linejoin="round"><circle cx="12" cy="12" r="3"/><path d="M12 2.8l1.6 2.2 2.6-.9.3 2.7 2.7.3-.9 2.6 2.2 1.6-2.2 1.6.9 2.6-2.7.3-.3 2.7-2.6-.9L12 21.2l-1.6-2.2-2.6.9-.3-2.7-2.7-.3.9-2.6L2.8 12 5 10.4l-.9-2.6 2.7-.3.3-2.7 2.6.9z"/></svg></div><div class="sbtn" style="top:607px"><svg width="29" height="29" viewBox="0 0 24 24" fill="none" stroke="#555" stroke-width="1.8" stroke-linecap="round" stroke-linejoin="round"><circle cx="12" cy="12" r="8.5"/><path d="M12 11v6"/><circle cx="12" cy="7.6" r="0.6" fill="#555"/></svg></div><div class="sbtn" style="top:688px"><svg width="29" height="29" viewBox="0 0 24 24" fill="none" stroke="#555" stroke-width="1.8" stroke-linecap="round" stroke-linejoin="round"><circle cx="12" cy="12" r="8.5"/><path d="M9.5 9.5a2.5 2.5 0 1 1 3.5 2.3c-.7.3-1 .8-1 1.5v.5"/><circle cx="12" cy="16.8" r="0.5" fill="#555"/></svg></div></div>
<div class="abs" style="left:86px;top:66px;width:529px;height:190px;border:1px solid #e6e6e6;border-top:none;border-radius:0 0 6px 6px;background:#fff;overflow:hidden">
<div class="abs" style="left:0;top:-20px;width:528px;height:30px;background:#fff;border-bottom:1px solid #e3e6ea"><div class="abs" style="left:5px;top:8px;"><svg width="20" height="14" viewBox="0 0 20 14"><ellipse cx="10" cy="7" rx="8" ry="5" fill="none" stroke="#bbb" stroke-width="1.6" stroke-dasharray="1 0.6"/><circle cx="10" cy="7" r="2.4" fill="none" stroke="#bbb" stroke-width="1.4"/></svg></div><div class="abs" style="left:42px;top:7px;width:16px;height:16px;background:#dcdcdc"></div><div class="abs" style="left:89px;top:7px"><svg width="12" height="16" viewBox="0 0 12 16"><path d="M6 1C4 4.5 1.5 7.5 1.5 10.5a4.5 4.5 0 0 0 9 0C10.5 7.5 8 4.5 6 1z" fill="#777"/></svg></div><div class="abs" style="left:178px;top:21px;width:6px;height:2px;background:#c8c8c8"></div></div>
<div class="abs" style="left:0;top:11px;width:528px;height:29px;background:#8f8f8f"><div class="abs" style="left:5px;top:8px"><svg width="20" height="14" viewBox="0 0 20 14"><ellipse cx="10" cy="7" rx="8" ry="5" fill="none" stroke="#b0b0b0" stroke-width="1.6" stroke-dasharray="1 0.6"/><circle cx="10" cy="7" r="2.4" fill="none" stroke="#b0b0b0" stroke-width="1.4"/></svg></div><div class="abs" style="left:42px;top:7px;width:16px;height:16px;background:#cfcfcf"></div><div class="abs" style="left:89px;top:6px"><svg width="12" height="16" viewBox="0 0 12 16"><path d="M6 1C4 4.5 1.5 7.5 1.5 10.5a4.5 4.5 0 0 0 9 0C10.5 7.5 8 4.5 6 1z" fill="#999"/></svg></div><div class="txt" style="left:131px;top:7.5px;font-size:14.4px;color:#fff">SplitSegment_1</div></div>
<div class="abs" style="left:0;top:40px;width:528px;height:30px;background:#fff;border-bottom:1px solid #d5dae0"><div class="abs" style="left:5px;top:8px"><svg width="20" height="14" viewBox="0 0 20 14"><ellipse cx="10" cy="7" rx="8" ry="5" fill="none" stroke="#999" stroke-width="1.6" stroke-dasharray="1 0.6"/><circle cx="10" cy="7" r="2.4" fill="none" stroke="#999" stroke-width="1.4"/></svg></div><div class="abs" style="left:42px;top:8px;width:16px;height:16px;background:#d9d9d9"></div><div class="abs" style="left:89px;top:6px"><svg width="12" height="16" viewBox="0 0 12 16"><path d="M6 1C4 4.5 1.5 7.5 1.5 10.5a4.5 4.5 0 0 0 9 0C10.5 7.5 8 4.5 6 1z" fill="#888"/></svg></div><div class="txt" style="left:131px;top:8px;font-size:14.4px;color:#b8b8b8">SplitSegment_2</div></div>
<div class="abs" style="left:0;top:143px;width:528px;height:47px;background:#f4f4f4"><svg class="abs" style="left:307px;top:0" width="220" height="47" viewBox="394 209 220 47" fill="none" stroke="#8c8c8c" stroke-width="1.8" stroke-linecap="round" stroke-linejoin="round">
<rect x="409" y="223" width="22.5" height="22.5" rx="2.5"/><path d="M420.2 227.5v14M413.2 234.5h14"/>
<path d="M455 241h-1.5a2.5 2.5 0 0 1-2.5-2.5v-12.5a2.5 2.5 0 0 1 2.5-2.5h12.5a2.5 2.5 0 0 1 2.5 2.5v2"/><rect x="455.7" y="228" width="17.8" height="17.2" rx="2.5"/>
<path d="M496 245.2L492.4 240.5Q491.5 239 492.7 237.8L507 223.3Q508.4 222 509.8 223.3L515.3 228.8Q516.6 230.2 515.3 231.6L501.2 245.2Z" />
<path d="M492.7 237.8L501.6 232.6 507 237.8 499.5 245.2H496L492.4 240.5Z" fill="#dedede" stroke="none"/>
<path d="M496 245.2L492.4 240.5Q491.5 239 492.7 237.8L507 223.3Q508.4 222 509.8 223.3L515.3 228.8Q516.6 230.2 515.3 231.6L501.2 245.2ZM501.6 232.6L507 237.8M497 245.2H514.7"/>
<path d="M534.2 226.9H557.7M542.4 226.9a3.6 3.6 0 0 1 7.2 0M537.2 226.9L539.6 243a2.5 2.5 0 0 0 2.5 2.2h9.6a2.5 2.5 0 0 0 2.5-2.2L556.6 226.9M543.4 230.5v10M548.5 230.5v10"/>
<circle cx="594.2" cy="228" r="5.6"/><rect x="576.8" y="234.9" width="10.2" height="10.3" rx="2.3"/><path d="M599.5 237.5Q599.5 244 592 245.2"/>
</svg></div>
</div>
<div class="abs" style="left:343px;top:266px;width:18px;height:3px;background-image:radial-gradient(circle,#999 0.6px,transparent 0.9px);background-size:3px 3px"></div>
<div class="abs" style="left:633px;top:70px;width:8px;height:150px;background:#c4c4c4;border:1px solid #a6a6a6;border-bottom:none;border-radius:4px 4px 0 0"></div>
<div class="abs" style="left:633px;top:219px;width:8px;height:760px;background:#828282;border-radius:0 0 4px 4px"></div>
<div class="abs" style="left:86px;top:279px;width:529px;height:145px;border:1px solid #eaeaea;border-radius:6px;background:#fff;overflow:hidden">
<div class="abs" style="left:0;top:0;width:527px;height:34px;background:#f4f4f4"></div>
<div class="txt" style="left:8.5px;top:9.5px;font-size:16.5px;color:#1a1a1a">Tools</div>
<div class="tbtn" style="left:10px;top:44px"><svg style="position:absolute;left:18px;top:6px" width="26" height="26" viewBox="0 0 24 24" fill="none" stroke="#5a5a5a" stroke-width="1.6" stroke-linecap="round" stroke-linejoin="round"><path d="M3 21v-6l3-3 1.5 2V21z" fill="none"/><path d="M7.5 14L12 17.5 16.5 14v7H7.5z" fill="#5a5a5a" stroke="#5a5a5a"/><path d="M16.5 14l2-2 2 3v6h-4z"/><path d="M6 12V7M18.5 12V7" /><circle cx="6" cy="6" r="1.8" fill="#5a5a5a"/><circle cx="18.5" cy="6" r="1.8" fill="#5a5a5a"/><path d="M3 21h18"/></svg></div>
<div class="tbtn" style="left:84px;top:44px"><svg style="position:absolute;left:18px;top:6px" width="26" height="26" viewBox="0 0 24 24" fill="none" stroke="#5a5a5a" stroke-width="1.6" stroke-linecap="round" stroke-linejoin="round"><rect x="4" y="4" width="16" height="16"/><circle cx="4" cy="4" r="1.6" fill="#fff"/><circle cx="20" cy="4" r="1.6" fill="#fff"/><circle cx="4" cy="20" r="1.6" fill="#fff"/><circle cx="20" cy="20" r="1.6" fill="#fff"/><path d="M10.5 10.5a2 2 0 1 0 0 3h1M13.5 13.5a2 2 0 1 0 0-3h-1" stroke-width="1.4"/></svg></div>
<div class="tbtn" style="left:158px;top:44px"><svg style="position:absolute;left:18px;top:6px" width="26" height="26" viewBox="0 0 24 24" fill="none" stroke="#5a5a5a" stroke-width="1.6" stroke-linecap="round" stroke-linejoin="round"><path d="M3.5 20.5l11-11" stroke-width="3.2"/><path d="M13.5 10.5l2-2" stroke="#fff" stroke-width="1.4"/><path d="M7 3.5l2 2M9 3.5l-2 2M17 3.5l2 2M19 3.5l-2 2M17 13.5l2 2M19 13.5l-2 2" stroke-width="1.3"/></svg></div>
<div class="tbtn" style="left:232px;top:44px"><svg style="position:absolute;left:18px;top:6px" width="26" height="26" viewBox="0 0 24 24" fill="none" stroke="#5a5a5a" stroke-width="1.6" stroke-linecap="round" stroke-linejoin="round"><rect x="12" y="3" width="8" height="7.5" fill="#5a5a5a" stroke="none"/><path d="M10 4H4.5v17l3.5-2 3.5 2 4-2 4 2v-6.5" stroke-width="1.8"/><path d="M9 8v4.5h10" stroke-dasharray="1.8 1.4" stroke-width="1.6"/></svg></div>
<div class="tbtn" style="left:306px;top:44px"><svg style="position:absolute;left:18px;top:6px" width="26" height="26" viewBox="0 0 24 24" fill="none" stroke="#5a5a5a" stroke-width="1.6" stroke-linecap="round" stroke-linejoin="round"><path d="M5 16V8.5l6-2.5"/><path d="M7.5 18V10l6-2.5"/><rect x="10" y="9.5" width="9" height="11" rx="1.2" transform="skewY(-20) translate(0 5)"/></svg></div>
<div class="tbtn" style="left:380px;top:44px"><svg style="position:absolute;left:18px;top:6px" width="26" height="26" viewBox="0 0 24 24" fill="none" stroke="#5a5a5a" stroke-width="1.6" stroke-linecap="round" stroke-linejoin="round"><rect x="4" y="6" width="6.5" height="12" rx="1.5" fill="#ff6633" stroke="none"/><path d="M12 3.5v17" stroke="#ff6633" stroke-width="1.4"/><path d="M14 6h3.5a1.5 1.5 0 0 1 1.5 1.5v9a1.5 1.5 0 0 1-1.5 1.5H14" stroke="#ff6633" stroke-width="1.4" stroke-dasharray="2 1.5"/></svg></div>
<div class="tbtn" style="left:454px;top:44px"><svg style="position:absolute;left:18px;top:6px" width="26" height="26" viewBox="0 0 24 24" fill="none" stroke="#5a5a5a" stroke-width="1.6" stroke-linecap="round" stroke-linejoin="round"><ellipse cx="12" cy="5.5" rx="6" ry="2.5"/><ellipse cx="12" cy="18.5" rx="6" ry="2.5"/><path d="M6 5.5v13M18 5.5v13"/></svg></div>
<div class="tbtn" style="left:10px;top:94px"><svg style="position:absolute;left:18px;top:6px" width="26" height="26" viewBox="0 0 24 24" fill="none" stroke="#5a5a5a" stroke-width="1.6" stroke-linecap="round" stroke-linejoin="round"><path d="M4 10l5-3 8-3 3 9-9 8-7-3z" stroke-width="1"/><path d="M4 10l13-6M9 7l11 6M4 18l16-5M11 21l6-17M4 10l7 11" stroke-width="0.8"/><circle cx="17" cy="4" r="1.7" fill="#5a5a5a"/></svg></div>
<div class="tbtn" style="left:84px;top:94px"><svg style="position:absolute;left:18px;top:6px" width="26" height="26" viewBox="0 0 24 24" fill="none" stroke="#5a5a5a" stroke-width="1.6" stroke-linecap="round" stroke-linejoin="round"><rect x="4.5" y="4.5" width="15" height="15" rx="1.5" stroke-width="2"/><path d="M12 4.5v15M4.5 12h15" stroke-width="2"/></svg></div>
<div class="tbtn" style="left:158px;top:94px"><svg style="position:absolute;left:18px;top:6px" width="26" height="26" viewBox="0 0 24 24" fill="none" stroke="#5a5a5a" stroke-width="1.6" stroke-linecap="round" stroke-linejoin="round"><path d="M6 18C6 11 11 6 18 6"/><circle cx="5.5" cy="18.5" r="2" fill="#fff"/><circle cx="18.5" cy="5.5" r="2" fill="#fff"/></svg></div>
<div class="tbtn" style="left:232px;top:94px"><svg style="position:absolute;left:18px;top:6px" width="26" height="26" viewBox="0 0 24 24" fill="none" stroke="#5a5a5a" stroke-width="1.6" stroke-linecap="round" stroke-linejoin="round"><path d="M11 5H4v16h16v-7" stroke-width="2.2" stroke-linecap="butt"/><path d="M9 15l1-4 8.5-8.5 3 3L13 14z"/><path d="M11 12l2 2"/></svg></div>
<div class="tbtn" style="left:306px;top:94px"><svg style="position:absolute;left:18px;top:6px" width="26" height="26" viewBox="0 0 24 24" fill="none" stroke="#5a5a5a" stroke-width="1.6" stroke-linecap="round" stroke-linejoin="round"><rect x="3" y="5" width="18" height="14" fill="#eee" stroke="#5a5a5a" stroke-width="1.6"/><path d="M5 18c1-5 1-9 3-12M7 18c1-4 2-8 4-11M13 7c3-1 6 1 6 4M10 10c2-2 5-2 6 0 1 3-2 4-1 7M17 12c1 2 1 4 1 6M5 8c2 0 3 2 3 4" stroke-width="0.9"/></svg></div>
<div class="tbtn" style="left:380px;top:94px"><svg style="position:absolute;left:18px;top:6px" width="26" height="26" viewBox="0 0 24 24" fill="none" stroke="#5a5a5a" stroke-width="1.6" stroke-linecap="round" stroke-linejoin="round"><path d="M4 7a13 13 0 0 1 13 13H4z" fill="#5a5a5a" stroke="none"/><circle cx="4.00" cy="3.50" r="0.95" fill="#5a5a5a" stroke="none"/><circle cx="7.22" cy="3.82" r="0.95" fill="#5a5a5a" stroke="none"/><circle cx="10.31" cy="4.76" r="0.95" fill="#5a5a5a" stroke="none"/><circle cx="13.17" cy="6.28" r="0.95" fill="#5a5a5a" stroke="none"/><circle cx="15.67" cy="8.33" r="0.95" fill="#5a5a5a" stroke="none"/><circle cx="17.72" cy="10.83" r="0.95" fill="#5a5a5a" stroke="none"/><circle cx="19.24" cy="13.69" r="0.95" fill="#5a5a5a" stroke="none"/><circle cx="20.18" cy="16.78" r="0.95" fill="#5a5a5a" stroke="none"/><circle cx="20.50" cy="20.00" r="0.95" fill="#5a5a5a" stroke="none"/></svg></div>
</div>
<div class="abs" style="left:86px;top:442px;width:529px;height:529px;border:1px solid #eaeaea;border-radius:6px;background:#fff;overflow:hidden">
<div class="abs" style="left:0;top:0;width:527px;height:38px;background:#f4f4f4"></div>
<svg class="abs" style="left:11px;top:9px" width="22" height="22" viewBox="0 0 24 24" fill="none" stroke-linecap="round"><rect x="2.5" y="5" width="7" height="14" rx="1.5" fill="#ff6633"/><path d="M11.5 2.5v19" stroke="#ff6633" stroke-width="1.4"/><path d="M14 5h4a1.5 1.5 0 0 1 1.5 1.5v11A1.5 1.5 0 0 1 18 19h-4" stroke="#ff6633" stroke-width="1.4" stroke-dasharray="2 1.6"/></svg>
<div class="txt" style="left:42px;top:10px;font-size:16.8px;color:#1a1a1a">Split segment</div>
<div class="txt" style="left:10.5px;top:59px;font-size:16.3px;color:#1a1a1a">Parent Segment :</div>
<div class="abs" style="left:148px;top:50px;width:235px;height:33px;border:1px solid #cfcfcf;border-radius:6px;background:#fff"><div class="abs" style="left:9px;top:8px;width:16px;height:16px;background:#bbff00"></div><div class="txt" style="left:33px;top:9px;font-size:14px;color:#1a1a1a">Islands_1</div><div class="abs" style="left:201px;top:6px"><svg width="20" height="20" viewBox="0 0 20 20" fill="none" stroke="#555" stroke-width="1.5" stroke-linecap="round" stroke-linejoin="round"><circle cx="10" cy="10" r="8.3"/><path d="M6.5 8.5L10 12l3.5-3.5"/></svg></div></div>
<div class="abs" style="left:393px;top:50px;width:35px;height:35px;border:1px solid #d0d0d0;border-radius:4px;background:#fff;overflow:hidden"><div class="abs" style="left:-1px;top:-1px"><svg width="35" height="35" viewBox="0 0 35 35"><path d="M5 9.5L10.5 6.5 16.5 8.5V16L11 18.5 5 16.5z" fill="#ff6633"/><path d="M5 9.5L11 11.5 16.5 8.5M11 11.5V18.5" stroke="#fff" stroke-width="0.8" fill="none"/><path d="M20.5 6.5L29.5 21.5 20.5 24z" fill="#ff6633"/><path d="M17.5 10L20.5 6.5V24L17.5 24.5z" fill="#ff6633"/><path d="M20.6 7V24" stroke="#fff" stroke-width="0.9"/><circle cx="13" cy="21.8" r="5.6" fill="#fff" stroke="#ff6633" stroke-width="2.3"/></svg></div></div>
<div class="abs" style="left:438px;top:50px;width:35px;height:35px;border:1px solid #d0d0d0;border-radius:4px;background:#fff;overflow:hidden"><div class="abs" style="left:-1px;top:-1px"><svg width="35" height="35" viewBox="0 0 35 35" fill="none" stroke="#555" stroke-width="1.6"><path d="M17 6.5C14 10.5 9 15 9 19.5a8 8 0 0 0 16 0C25 15 20 10.5 17 6.5z"/></svg></div></div>
<div class="abs" style="left:483px;top:50px;width:35px;height:35px;border:1px solid #d0d0d0;border-radius:4px;background:#fff;overflow:hidden"><div class="abs" style="left:-1px;top:-1px"><svg width="35" height="35" viewBox="0 0 35 35" fill="none" stroke="#555" stroke-width="2" stroke-linecap="round"><path d="M8.8 19.5A8.5 8.5 0 1 0 15 9.3"/><path d="M17 6.5L13.8 9.5 17 12.3" fill="#555" stroke-linejoin="round"/><circle cx="17.5" cy="18" r="2.8" fill="#555" stroke="none"/></svg></div></div>
<div class="abs" style="left:18px;top:106px;width:448px;height:213px;border:1px solid #e6e6e6;border-top:none;border-radius:0 0 6px 6px;background:#fff;overflow:hidden">
<div class="abs" style="left:0;top:0;width:447px;height:30px;background:#243545"><div class="abs" style="left:6px;top:7px;width:16px;height:16px;background:#44cc11"></div><div class="txt" style="left:50px;top:7.5px;font-size:14.4px;color:#fff">SplitSegment_1</div></div>
<div class="abs" style="left:0;top:30px;width:447px;height:30px;background:#fff;border-bottom:1px solid #d5dae0"><div class="abs" style="left:6px;top:7px;width:16px;height:16px;background:#c8a8e6"></div><div class="txt" style="left:50px;top:8px;font-size:14.4px;color:#1a1a1a">SplitSegment_2</div></div>
</div>
<div class="abs" style="left:483px;top:104px;width:35px;height:34px;border:1px solid #d6d6d6;border-radius:4px;background:#e4e4e4;display:flex;align-items:center;justify-content:center"><svg width="28" height="28" viewBox="0 0 24 24" fill="none" stroke="#9a9a9a" stroke-width="1.6"><rect x="3" y="3" width="18" height="18" rx="2"/><path d="M12 7v10M7 12h10"/></svg></div>
<div class="abs" style="left:483px;top:149px;width:35px;height:34px;border:1px solid #d6d6d6;border-radius:4px;background:#e4e4e4;display:flex;align-items:center;justify-content:center"><svg width="28" height="28" viewBox="0 0 24 24" fill="none" stroke="#9a9a9a" stroke-width="1.5" stroke-linecap="round"><path d="M4 6h16M9.5 3h5M6 6l1 14a1.5 1.5 0 0 0 1.5 1.3h7A1.5 1.5 0 0 0 17 20l1-14M10 10v7M14 10v7"/></svg></div>
<div class="abs" style="left:10px;top:335px;width:508px;height:32px;border:1px solid #d6d6d6;border-radius:6px;background:#fff;overflow:hidden"><div class="abs" style="left:0;top:0;width:253px;height:30px;background:#ff6633"></div><div class="txt" style="left:108px;top:8px;font-size:14.3px;font-weight:bold;color:#fff">Paint</div><div class="txt" style="left:361px;top:8px;font-size:13.6px;color:#1a1a1a">Erase</div></div>
<div class="txt" style="left:10.5px;top:388px;font-size:16.1px;color:#1a1a1a">Brush Shape :</div>
<div class="abs" style="left:148px;top:380px;width:370px;height:33px;border:1px solid #cfcfcf;border-radius:6px;background:#fff"><div class="txt" style="left:7px;top:9px;font-size:13.9px;color:#1a1a1a">Lasso</div><div class="abs" style="left:336px;top:6px"><svg width="20" height="20" viewBox="0 0 20 20" fill="none" stroke="#555" stroke-width="1.5" stroke-linecap="round" stroke-linejoin="round"><circle cx="10" cy="10" r="8.3"/><path d="M6.5 8.5L10 12l3.5-3.5"/></svg></div></div>
<div class="txt" style="left:10.5px;top:435px;font-size:15.5px;color:#b9b9b9">Brush Size :</div>
<div class="abs" style="left:148px;top:440px;width:307px;height:6px;border-radius:3px;background:#c4c4c4"></div><div class="abs" style="left:148px;top:440px;width:154px;height:6px;border-radius:3px;background:#555"></div><div class="abs" style="left:294px;top:436px;width:15px;height:15px;border-radius:50%;background:#555;border:1.5px solid #fff;box-sizing:content-box;margin:-1.5px"></div>
<div class="abs" style="left:467px;top:430px;width:51px;height:28px;border:1px solid #d6d6d6;border-radius:3px;background:#fff"><div class="txt" style="left:4px;top:8px;font-size:12.5px;color:#b5b5b5">13%</div><div class="abs" style="left:34px;top:0;width:1px;height:26px;background:#e0e0e0"></div><svg class="abs" style="left:37px;top:3px" width="10" height="20" viewBox="0 0 10 20"><path d="M1.5 7L5 3.5 8.5 7z M1.5 13L5 16.5 8.5 13z" fill="#c8c8c8"/></svg></div>
<div class="abs" style="left:0;top:470px;width:527px;height:59px;background:#f4f4f4"></div>
<div class="abs" style="left:133px;top:480px;width:118px;height:36px;border-radius:3px;background:#243545"></div><div class="txt" style="left:165px;top:490px;font-size:16.7px;color:#fff">Update</div>
<div class="abs" style="left:266px;top:480px;width:118px;height:36px;border-radius:3px;background:#243545"></div><div class="txt" style="left:305px;top:490px;font-size:16.4px;color:#fff">Apply</div>
<div class="abs" style="left:398px;top:480px;width:120px;height:37px;border:1px solid #d0d0d0;border-radius:3px;background:#fff"></div><div class="txt" style="left:436px;top:490px;font-size:16.8px;color:#1a1a1a">Close</div>
</div>
  <div class="t_status">
    <div class="txt" style="right:6px;top:12px;font-size:12.8px;color:#fff"></div>
  </div>
  <!-- viewports -->
  <div class="abs" style="left:1278px;top:440px;width:18px;height:3px;background-image:radial-gradient(circle,#aaa 0.6px,transparent 0.9px);background-size:3px 3px"></div>
  <div class="vp" class="t_vpC" style="left:654px;top:31px;width:628px;height:406px;border-color:#33ff11"><svg class="abs" style="left:0;top:0" width="620" height="398" viewBox="658 35 620 398">
<defs>
<filter id="bl4" x="-50%" y="-50%" width="200%" height="200%"><feGaussianBlur stdDeviation="4"/></filter>
<filter id="bl8" x="-50%" y="-50%" width="200%" height="200%"><feGaussianBlur stdDeviation="8"/></filter>
<filter id="bl2" x="-50%" y="-50%" width="200%" height="200%"><feGaussianBlur stdDeviation="1.5"/></filter>
<clipPath id="cBody"><path d="M746 35H1179L1170 100L1164 148L1165 187L1169 250L1187 280L1196 325L1198 369L1195 413L1193 433H732L725 410L716 380L714 369L714 250L721 187L736 135L756 109L761 96L756 83Z"/></clipPath>
</defs>
<rect x="658" y="35" width="620" height="398" fill="#000"/>
<path d="M746 35H1179L1170 100L1164 148L1165 187L1169 250L1187 280L1196 325L1198 369L1195 413L1193 433H732L725 410L716 380L714 369L714 250L721 187L736 135L756 109L761 96L756 83Z" fill="#525252"/>
<g clip-path="url(#cBody)">
 <g filter="url(#bl8)">
  <ellipse cx="768" cy="90" rx="20" ry="60" fill="#5a5a5a"/>
  <ellipse cx="815" cy="100" rx="25" ry="60" fill="#474747"/>
  <ellipse cx="872" cy="85" rx="20" ry="50" fill="#555"/>
  <ellipse cx="1012" cy="70" rx="60" ry="40" fill="#575757"/>
  <ellipse cx="1012" cy="65" rx="35" ry="22" fill="#4c4c4c"/>
  <ellipse cx="1135" cy="220" rx="25" ry="150" fill="#5a5a5a"/>
  <ellipse cx="740" cy="270" rx="22" ry="120" fill="#4c4c4c"/>
  <ellipse cx="880" cy="190" rx="40" ry="35" fill="#474747"/>
  <ellipse cx="990" cy="180" rx="60" ry="30" fill="#4a4a4a"/>
  <ellipse cx="925" cy="272" rx="70" ry="45" fill="#585858"/>
  <ellipse cx="825" cy="330" rx="28" ry="55" fill="#575757"/>
  <ellipse cx="1060" cy="330" rx="28" ry="55" fill="#565656"/>
  <ellipse cx="962" cy="392" rx="42" ry="45" fill="#494949"/><ellipse cx="968" cy="330" rx="18" ry="28" fill="#595959"/>
  <ellipse cx="975" cy="330" rx="22" ry="35" fill="#555"/>
  <ellipse cx="1010" cy="240" rx="30" ry="20" fill="#555"/>
 </g>
<g filter="url(#bl2)">
  <path d="M951 100c4-3 9 2 7 10s-6 12-9 10-2-16 2-20z" fill="#0a0a0a"/>
  <path d="M1080 106c5-4 10 2 8 9s-8 10-10 6 0-12 2-15z" fill="#0a0a0a"/>
  <path d="M972 162c3-2 6 0 5 4s-4 6-6 4z" fill="#151515"/>
  <circle cx="1008" cy="220" r="2.5" fill="#2a2a2a"/><circle cx="1025" cy="220" r="2.5" fill="#2a2a2a"/><circle cx="1025" cy="228" r="2" fill="#2a2a2a"/>
  <g fill="#3c3c3c"><circle cx="860" cy="48" r="2"/><circle cx="866" cy="62" r="1.5"/><circle cx="872" cy="78" r="2"/><circle cx="864" cy="106" r="2"/><circle cx="876" cy="112" r="1.5"/><circle cx="880" cy="98" r="1.8"/><circle cx="1083" cy="44" r="1.5"/><circle cx="1078" cy="66" r="1.5"/></g>
 </g>
</g>
<!-- segments -->
<path d="M808 99c3-5 14-5 17 1 3 6-1 18 0 22l-3 18 6 30 5 20 3 12M812 118c-4-6-6-14-4-19M815 124l4 28 5 26 6 24" stroke="#77ee11" stroke-width="1.6" fill="none"/>
<path d="M918 250l3-12 6 8 14 7 19 3M918 250l2 10 16 8 17 10 10 9" stroke="#88ee11" stroke-width="1.8" fill="none"/>
<path d="M921 241c-2 5-2 12 3 16l6-4z" fill="#66dd11"/>
<path d="M960 258l4 0 1 22 -2 5 2 0M972 256l0 26 3 6 14-10 16-8 12-12 4-4-2-12-8 6-14 6-15 3" stroke="#d8b8e8" stroke-width="1.6" fill="none"/>
<path d="M1016 250l6-5 3 12-5 4z M966 280l6 8 4-6z" fill="#b8b09a"/>
<path d="M1119 128l4-3 3 4-2 5-4 0z" fill="#d8c8d8"/>
</svg>
<div class="abs" style="left:597px;top:10px;width:10px;height:378px;border-radius:5px;background:#907f7f;border:1px solid #a89c9c"></div>
<div class="abs" style="left:588px;top:147px;width:28px;height:28px;border-radius:50%;background:#00e600"></div>
<div class="txt" style="left:8.5px;top:362px;font-size:16px;font-weight:bold;color:#1aee00">Coronal</div>
<div class="txt" style="right:41px;top:362px;font-size:16.2px;font-weight:bold;color:#1aee00">44.5117 mm</div>
<svg class="abs" style="left:5px;top:5px" width="24" height="24" viewBox="0 0 24 24" fill="none" stroke="#fff" stroke-width="1.9" stroke-linecap="round" stroke-linejoin="round"><path d="M2.5 11.5V4.5a2 2 0 0 1 2-2h15a2 2 0 0 1 2 2v15a2 2 0 0 1-2 2h-8.5"/><rect x="1.5" y="15.5" width="6" height="6" rx="1.5"/><path d="M10.5 13.5l7-7M12.5 6.5h5v5"/></svg></div>
  <div class="vp" class="t_vpA" style="left:1291px;top:31px;width:627px;height:406px;border-color:#ff3b3b"><svg class="abs" style="left:0;top:0" width="619" height="398" viewBox="1295 35 619 398">
<defs>
<filter id="ab6" x="-50%" y="-50%" width="200%" height="200%"><feGaussianBlur stdDeviation="6"/></filter>
<filter id="ab1" x="-50%" y="-50%" width="200%" height="200%"><feGaussianBlur stdDeviation="1"/></filter>
<clipPath id="aBody"><path d="M1415 188L1431 174L1469 164L1506 143L1544 127L1622 125L1664 135L1706 153L1733 168L1761 191L1778 227L1785 260L1778 299L1767 324L1733 332L1650 342L1567 336L1483 332L1436 329L1425 291L1414 249Z"/></clipPath>
</defs>
<rect x="1295" y="35" width="619" height="398" fill="#000"/>
<ellipse cx="1600" cy="116" rx="40" ry="8" fill="#1a1a1a" filter="url(#ab1)"/>
<path d="M1451 336Q1600 345 1754 332L1752 341L1706 399H1531L1460 340Z" fill="#0b0b0b"/>
<path d="M1451 336Q1600 346 1754 332" stroke="#8a8a8a" stroke-width="2.2" fill="none"/>
<path d="M1467 344Q1600 355 1750 344" stroke="#666" stroke-width="1.5" fill="none"/>
<path d="M1460 340L1518 392Q1524 399 1533 400H1690Q1700 399 1706 392L1752 340" stroke="#7a7a7a" stroke-width="2" fill="none"/>
<path d="M1415 188L1431 174L1469 164L1506 143L1544 127L1622 125L1664 135L1706 153L1733 168L1761 191L1778 227L1785 260L1778 299L1767 324L1733 332L1650 342L1567 336L1483 332L1436 329L1425 291L1414 249Z" fill="#525252"/>
<g clip-path="url(#aBody)">
 <g filter="url(#ab6)">
  <ellipse cx="1600" cy="170" rx="90" ry="25" fill="#555"/>
  <ellipse cx="1610" cy="230" rx="35" ry="40" fill="#4c4c4c"/>
  <ellipse cx="1610" cy="285" rx="25" ry="25" fill="#4b4b4b"/>
  <ellipse cx="1720" cy="260" rx="40" ry="45" fill="#4a4a4a"/>
  <ellipse cx="1700" cy="318" rx="70" ry="10" fill="#575757"/>
  <ellipse cx="1450" cy="250" rx="30" ry="60" fill="#545454"/>
 </g>
 <ellipse cx="1455" cy="260" rx="45" ry="60" fill="#5a5a5a" filter="url(#ab6)"/>
 <g><path d="M1465 255L1605 262" stroke="#6a6a6a" stroke-width="0.8" opacity="0.35"/><path d="M1465 255L1601 286" stroke="#6a6a6a" stroke-width="0.8" opacity="0.35"/><path d="M1465 255L1594 310" stroke="#6a6a6a" stroke-width="0.8" opacity="0.35"/><path d="M1465 255L1582 331" stroke="#6a6a6a" stroke-width="0.8" opacity="0.35"/><path d="M1465 255L1567 350" stroke="#6a6a6a" stroke-width="0.8" opacity="0.35"/><path d="M1465 255L1549 367" stroke="#6a6a6a" stroke-width="0.8" opacity="0.35"/><path d="M1465 255L1529 380" stroke="#6a6a6a" stroke-width="0.8" opacity="0.35"/><path d="M1465 255L1506 389" stroke="#6a6a6a" stroke-width="0.8" opacity="0.35"/><path d="M1465 255L1482 394" stroke="#6a6a6a" stroke-width="0.8" opacity="0.35"/><path d="M1465 255L1458 395" stroke="#6a6a6a" stroke-width="0.8" opacity="0.35"/><path d="M1465 255L1434 391" stroke="#6a6a6a" stroke-width="0.8" opacity="0.35"/><path d="M1465 255L1410 384" stroke="#6a6a6a" stroke-width="0.8" opacity="0.35"/><path d="M1465 255L1389 372" stroke="#6a6a6a" stroke-width="0.8" opacity="0.35"/><path d="M1465 255L1370 357" stroke="#6a6a6a" stroke-width="0.8" opacity="0.35"/><path d="M1465 255L1353 339" stroke="#6a6a6a" stroke-width="0.8" opacity="0.35"/><path d="M1465 255L1340 319" stroke="#6a6a6a" stroke-width="0.8" opacity="0.35"/><path d="M1465 255L1331 296" stroke="#6a6a6a" stroke-width="0.8" opacity="0.35"/><path d="M1465 255L1326 272" stroke="#6a6a6a" stroke-width="0.8" opacity="0.35"/><path d="M1465 255L1325 248" stroke="#6a6a6a" stroke-width="0.8" opacity="0.35"/><path d="M1465 255L1329 224" stroke="#6a6a6a" stroke-width="0.8" opacity="0.35"/><path d="M1465 255L1336 200" stroke="#6a6a6a" stroke-width="0.8" opacity="0.35"/><path d="M1465 255L1348 179" stroke="#6a6a6a" stroke-width="0.8" opacity="0.35"/><path d="M1465 255L1363 160" stroke="#6a6a6a" stroke-width="0.8" opacity="0.35"/><path d="M1465 255L1381 143" stroke="#6a6a6a" stroke-width="0.8" opacity="0.35"/><path d="M1465 255L1401 130" stroke="#6a6a6a" stroke-width="0.8" opacity="0.35"/><path d="M1465 255L1424 121" stroke="#6a6a6a" stroke-width="0.8" opacity="0.35"/><path d="M1465 255L1448 116" stroke="#6a6a6a" stroke-width="0.8" opacity="0.35"/><path d="M1465 255L1472 115" stroke="#6a6a6a" stroke-width="0.8" opacity="0.35"/><path d="M1465 255L1496 119" stroke="#6a6a6a" stroke-width="0.8" opacity="0.35"/><path d="M1465 255L1520 126" stroke="#6a6a6a" stroke-width="0.8" opacity="0.35"/><path d="M1465 255L1541 138" stroke="#6a6a6a" stroke-width="0.8" opacity="0.35"/><path d="M1465 255L1560 153" stroke="#6a6a6a" stroke-width="0.8" opacity="0.35"/><path d="M1465 255L1577 171" stroke="#6a6a6a" stroke-width="0.8" opacity="0.35"/><path d="M1465 255L1590 191" stroke="#6a6a6a" stroke-width="0.8" opacity="0.35"/><path d="M1465 255L1599 214" stroke="#6a6a6a" stroke-width="0.8" opacity="0.35"/><path d="M1465 255L1604 238" stroke="#6a6a6a" stroke-width="0.8" opacity="0.35"/></g>
 <circle cx="1637" cy="183" r="2" fill="#111"/>
 <circle cx="1605" cy="276" r="1.5" fill="#222"/><circle cx="1612" cy="278" r="1.5" fill="#222"/>
 <path d="M1556 232Q1570 260 1561 278M1580 303l6 10" stroke="#6a6a6a" stroke-width="1" fill="none"/>
</g>
<!-- green blob -->
<path d="M1435.6 238.4 L1445.0 235.3 L1462.2 236.9 L1465.3 229.1 L1470.0 227.5 L1473.1 240.0 L1479.4 241.6 L1493.4 257.2 L1498.1 271.2 L1496.6 275.2 L1471.6 277.5 L1457.5 283.8 L1451.2 285.3 L1445.0 266.6 L1437.2 257.2 L1434.8 244.7Z" fill="#88ee33"/>
<path d="M1438.0 243.1 L1457.5 241.6 L1459.1 255.6 L1455.9 263.4 L1446.6 265.0 L1438.8 255.6Z" fill="#575757"/>
<path d="M1471.6 244.7 L1485.6 243.1 L1491.9 255.6 L1493.4 263.4 L1479.4 263.4 L1471.6 257.2Z" fill="#5a5a5a"/>
<circle cx="1462.2" cy="252.5" r="7.5" fill="#a8f866"/>
<path d="M1438.8 250.9 L1455.9 252.5 L1456.7 259.5 L1448.1 260.3Z" fill="#0a0a0a"/>
<path d="M1471.6 250.9 L1485.6 251.7 L1488.8 255.6 L1471.6 255.6Z" fill="#0a0a0a"/>
<path d="M1507.5 268.1 L1513.8 266.6 L1523.1 265.0 L1529.4 269.7 L1531.7 277.5 L1527.8 281.4 L1515.3 282.2 L1508.3 277.5Z" fill="#77dd33"/>
<g stroke="#77ee11" stroke-width="1.6" fill="none">
<path d="M1535.6 199.4 L1562.2 197.8 L1548.1 232.2 L1543.4 225.9 L1552.8 218.1"/>
<path d="M1535.6 199.4 Q1523.1 208.8 1529.4 221.2"/>
<path d="M1532.5 236.9 L1541.9 243.1M1534.1 249.4 L1538.8 252.5"/>
</g>
<path d="M1526.2 208.8 Q1529.4 202.5 1535.6 199.4 L1532.5 218.1Z" fill="#77ee11" opacity="0.8"/>
<path d="M1648.1 204.1 L1663.8 205.6 L1673.1 215.0 L1663.8 221.2 L1657.5 236.9 L1657.5 250.9 L1670.0 255.6 L1684.1 258.8 L1684.1 263.4 L1649.7 277.5 L1651.2 263.4 L1654.4 246.2 L1651.2 221.2Z" fill="#b0aa90" opacity="0.45"/>
<path d="M1666.9 218.1 L1685.6 216.6 L1699.7 227.5 L1702.8 240.0 L1698.1 250.9 L1685.6 240.0 L1673.1 244.7 L1666.9 241.6 L1663.8 230.6Z" fill="#b4ae94" opacity="0.8"/>
<g stroke="#dcb8ee" stroke-width="1.4" fill="none">
<path d="M1646.6 202.5 L1663.8 204.1 L1673.1 215.0 L1685.6 216.6 Q1705.9 225.9 1698.1 250.9"/>
<path d="M1646.6 202.5 Q1657.5 221.2 1654.4 236.9 Q1655.9 252.5 1670.0 257.2 L1685.6 260.3 L1684.1 265.0 L1645.0 277.5 Q1651.2 265.0 1648.1 204.1"/>
<path d="M1663.8 221.2 Q1660.6 241.6 1670.0 243.1 L1685.6 236.9 L1695.0 241.6"/>
<path d="M1666.9 232.2 a5 5 0 1 0 1 0M1688.8 221.2 l6 6"/>
</g>
</svg>
<div class="abs" style="left:596px;top:10px;width:10px;height:378px;border-radius:5px;background:#907f7f;border:1px solid #a89c9c"></div>
<div class="abs" style="left:587px;top:185px;width:28px;height:28px;border-radius:50%;background:#ff0000"></div>
<div class="txt" style="left:8px;top:362px;font-size:16.5px;font-weight:bold;color:#ff1a1a">Axial</div>
<div class="txt" style="right:41px;top:362px;font-size:16.2px;font-weight:bold;color:#ff1a1a">-208.75 mm</div>
<svg class="abs" style="left:5px;top:5px" width="24" height="24" viewBox="0 0 24 24" fill="none" stroke="#fff" stroke-width="1.9" stroke-linecap="round" stroke-linejoin="round"><path d="M2.5 11.5V4.5a2 2 0 0 1 2-2h15a2 2 0 0 1 2 2v15a2 2 0 0 1-2 2h-8.5"/><rect x="1.5" y="15.5" width="6" height="6" rx="1.5"/><path d="M10.5 13.5l7-7M12.5 6.5h5v5"/></svg></div>
  <div class="vp" class="t_vpS" style="left:654px;top:446px;width:628px;height:536px;border-color:#ffff00"><svg class="abs" style="left:0;top:0" width="620" height="528" viewBox="658 450 620 528">
<defs>
<filter id="sb6" x="-50%" y="-50%" width="200%" height="200%"><feGaussianBlur stdDeviation="6"/></filter>
<filter id="sb1" x="-50%" y="-50%" width="200%" height="200%"><feGaussianBlur stdDeviation="1"/></filter>
<clipPath id="sBody"><path d="M777 502H1090L1099 539L1109 580L1113 633L1113 775L1109 832L1095 857L1066 873L1033 885L1035 924H865L857 895L845 870L830 830L819 810L805 795L796 773L793 680L797 633L781 612L773 580L762 543L760 531L769 514Z"/></clipPath>
</defs>
<rect x="658" y="450" width="620" height="528" fill="#000"/>
<path d="M770 705L792 705L795 773L805 795L819 810L830 830L845 870L857 895L865 924H830L800 880L778 800L766 740Z" fill="#0d0d0d" filter="url(#sb1)"/><ellipse cx="778" cy="735" rx="6" ry="18" fill="#1c1c1c" filter="url(#sb1)"/>
<rect x="1112" y="502" width="21" height="422" fill="#1c1c1c"/>
<rect x="1127" y="502" width="3" height="422" fill="#8a8a8a"/>
<rect x="1133" y="502" width="60" height="422" fill="#0c0c0c"/>
<rect x="1194" y="502" width="3" height="422" fill="#7a7a7a"/>
<path d="M777 502H1090L1099 539L1109 580L1113 633L1113 775L1109 832L1095 857L1066 873L1033 885L1035 924H865L857 895L845 870L830 830L819 810L805 795L796 773L793 680L797 633L781 612L773 580L762 543L760 531L769 514Z" fill="#4f4f4f"/>
<g clip-path="url(#sBody)">
 <g filter="url(#sb6)">
  <ellipse cx="830" cy="600" rx="30" ry="90" fill="#585858"/>
  <ellipse cx="880" cy="560" rx="40" ry="50" fill="#545454"/>
  <ellipse cx="1060" cy="560" rx="40" ry="50" fill="#565656"/>
  <ellipse cx="1000" cy="760" rx="100" ry="60" fill="#535353"/>
  <ellipse cx="960" cy="895" rx="80" ry="30" fill="#5c5c5c"/>
  <ellipse cx="1080" cy="800" rx="25" ry="60" fill="#575757"/>
  <ellipse cx="960" cy="630" rx="60" ry="15" fill="#4d4d4d"/>
 </g>
 <path d="M960 653c20-6 45 2 55 20 8 16 5 30-5 36-18 6-40 0-50-14z" fill="#4a4a4a"/>
 <g fill="#2c2c2c"><circle cx="975" cy="670" r="1.5"/><circle cx="985" cy="665" r="1.5"/><circle cx="992" cy="680" r="1.8"/><circle cx="1002" cy="672" r="1.5"/><circle cx="980" cy="690" r="1.5"/><circle cx="1008" cy="700" r="2"/><circle cx="995" cy="695" r="1.3"/></g>
 <path d="M964 658c-12-6-30-2-38 8-4 8-1 22 10 26 10 4 22 2 30-2-6-6-8-20-2-32z" fill="#050505"/>
 <path d="M892 572l5-4 3 6-3 10-6-2z" fill="#111"/>
 
</g>
<g stroke="#d6b4ea" stroke-width="1.5" fill="none">
 <path d="M930 503V539H978V527L976 503"/>
 <path d="M932 556L967 548L978 553L983 590L944 599L939 586Z"/>
 <path d="M954 616L971 599L985 590M954 616L1004 628L1012 634L1025 637L1036 640"/>
 <path d="M1012 634l6 12 4 8M1043 647l10 14 8 4M1058 673l4 8M1062 680l14 4"/>
 <path d="M1063 705l10-18"/>
</g>
<g fill="#b8b296" stroke="#d6b4ea" stroke-width="1.2">
 <path d="M985 503h24l-2 18-4 8 6 12-6 4-10-10-8-16z"/>
 <path d="M985 553l10 6 14 16-6 3-12-10-6-10z"/>
 <path d="M1009 588l8 4 6 12 14 12 12 12 14 16 10 14 4 12-3 6-8-6-10-16-16-16-14-14-10-14z"/>
 <path d="M1057 690l8 2 2 10-8 6-4-10z"/>
</g>
<path d="M867 754c0-12 8-18 18-16 10 2 20 10 26 22 8 12 12 24 22 36 6 6 8 8 10 8l-12 1-6-10-8-22-10-12-12-8-10-2-8 4z" stroke="#ccff22" stroke-width="1.8" fill="none"/>
<path d="M866 756l14-2 16 6 16 14 10 20 4 12" stroke="#ccff22" stroke-width="1.6" fill="none"/>
</svg>
<div class="abs" style="left:597px;top:10px;width:10px;height:508px;border-radius:5px;background:#907f7f;border:1px solid #a89c9c"></div>
<div class="abs" style="left:588px;top:250px;width:28px;height:28px;border-radius:50%;background:#ffee00"></div>
<div class="txt" style="left:8.5px;top:488px;font-size:16.6px;font-weight:bold;color:#ffee00">Sagittal</div>
<div class="txt" style="right:41px;top:487px;font-size:17.8px;font-weight:bold;color:#ffee00">-24.3999 mm</div>
<svg class="abs" style="left:5px;top:5px" width="24" height="24" viewBox="0 0 24 24" fill="none" stroke="#fff" stroke-width="1.9" stroke-linecap="round" stroke-linejoin="round"><path d="M2.5 11.5V4.5a2 2 0 0 1 2-2h15a2 2 0 0 1 2 2v15a2 2 0 0 1-2 2h-8.5"/><rect x="1.5" y="15.5" width="6" height="6" rx="1.5"/><path d="M10.5 13.5l7-7M12.5 6.5h5v5"/></svg></div>
  <div class="abs" class="t_vp3" style="left:1291px;top:446px;width:629px;height:538px;background:#fdfdfd"><svg class="abs" style="left:0;top:0" width="629" height="538" viewBox="1291 446 629 538">
<defs>
<filter id="texG" x="0" y="0" width="100%" height="100%"><feTurbulence type="turbulence" baseFrequency="0.45" numOctaves="2" seed="4" result="n"/><feColorMatrix in="n" type="matrix" values="0 0 0 0 0.1  0 0 0 0 0.25  0 0 0 0 0  -5 0 0 0 0.95" result="d"/><feComposite in="d" in2="SourceGraphic" operator="in" result="di"/><feMerge><feMergeNode in="SourceGraphic"/><feMergeNode in="di"/></feMerge></filter>
<filter id="texP" x="0" y="0" width="100%" height="100%"><feTurbulence type="turbulence" baseFrequency="0.3 0.8" numOctaves="2" seed="7" result="n"/><feColorMatrix in="n" type="matrix" values="0 0 0 0 0.35  0 0 0 0 0.28  0 0 0 0 0.45  -5 0 0 0 0.95" result="d"/><feComposite in="d" in2="SourceGraphic" operator="in" result="di"/><feMerge><feMergeNode in="SourceGraphic"/><feMergeNode in="di"/></feMerge></filter>
</defs>
<clipPath id="gclip"><path d="M1380 906 L1421 908 L1414 760 L1419 732 L1441 705 L1452 700 L1468 722 L1483 729 L1486 784 L1508 802 L1530 804 L1555 800 L1571 772 L1569 731 L1560 512 L1545 512 L1530 518 L1540 535 L1527 553 L1521 533 L1495 518 L1470 513 L1445 522 L1425 535 L1416 546 L1398 585 L1384 611 L1360 630 L1344 645 L1343 665 L1352 700 L1362 735 L1376 770Z"/></clipPath><g filter="url(#texG)">
<path d="M1380 906 L1421 908 L1414 760 L1419 732 L1441 705 L1452 700 L1468 722 L1483 729 L1486 784 L1508 802 L1530 804 L1555 800 L1571 772 L1569 731 L1560 512 L1545 512 L1530 518 L1540 535 L1527 553 L1521 533 L1495 518 L1470 513 L1445 522 L1425 535 L1416 546 L1398 585 L1384 611 L1360 630 L1344 645 L1343 665 L1352 700 L1362 735 L1376 770Z" fill="#66d600"/>
<g clip-path="url(#gclip)"><path d="M1343 650L1400 600L1470 640L1440 720L1380 760Z" fill="#5cc400" style="filter:blur(6px)"/></g>
</g>
<g filter="url(#texP)">
<path d="M1560 512 L1563 501 L1590 500 L1636 505 L1657 518 L1640 540 L1650 555 L1645 575 L1632 590 L1628 620 L1632 650 L1625 690 L1610 712 L1585 716 L1565 706 L1558 690Z" fill="#b89cd8"/>
<path d="M1665 538 L1678 540 L1700 534 L1729 531 L1750 540 L1763 554 L1773 582 L1770 610 L1763 642 L1755 670 L1742 701 L1763 740 L1772 752 L1773 795 L1758 815 L1763 931 L1724 930 L1712 848 L1700 836 L1686 815 L1689 790 L1692 762 L1686 776 L1671 808 L1647 822 L1623 815 L1604 795 L1580 771 L1571 774 L1569 731 L1597 731 L1624 730 L1648 710 L1668 687 L1670 670 L1653 648 L1641 624 L1627 605 L1630 586 L1641 579Z" fill="#b89cd8"/>
</g>
<path d="M1545 727 L1570 727 L1572 770 L1555 800 L1530 805 L1528 790 L1548 784 L1557 757 L1550 738Z" fill="#aadd00"/>
<path d="M1556 513 L1571 513 L1570 680 L1558 690 L1553 640Z" fill="#a8d800"/>
<path d="M1724 920 L1762 920 L1763 932 L1724 931Z" fill="#c0ee00"/>
<path d="M1499 659 L1520 644 L1545 660 L1556 690 L1570 706 L1600 716 L1632 702 L1648 708 L1624 730 L1597 731 L1569 729 L1541 723 L1503 693Z" fill="#fdfdfd"/>
<path d="M1521 748 L1538 737 L1552 745 L1556 765 L1546 784 L1528 786 L1519 770Z" fill="#fdfdfd"/>
<path d="M1616 748 L1638 741 L1652 752 L1646 776 L1633 793 L1620 790 L1613 770Z" fill="#fdfdfd"/>
<g fill="#fdfdfd"><path d="M1588 688l7-5 6 7-4 9-8 1z"/><path d="M1610 676l6-4 5 6-3 8-6 0z"/><path d="M1576 662l5-3 3 6-4 5z"/><path d="M1603 650l5-3 4 6-5 4z"/><path d="M1618 640l4-4 4 5-3 7z"/><path d="M1583 630l5-2 2 6-5 3z"/><path d="M1598 605l6-2 2 5-6 3z"/><path d="M1640 512l8-2 3 5-6 4z"/></g>
<g fill="#66d600"><path d="M1535 512l-6 -6 8 2 8 6z"/><path d="M1528 520l-8 4 6 4z"/></g>
<path d="M1774 872L1851 877L1856 881L1850 958L1771 951L1768 946Z" fill="#000"/>
<path d="M1775 873L1849 878L1844 955L1771 947Z" fill="#252525"/>
<path d="M1848 895L1845 940" stroke="#fff" stroke-width="1.2"/>
<text x="1808" y="936" font-family="Liberation Sans" font-size="62" fill="#f2f2f2" stroke="#f2f2f2" stroke-width="1.6" text-anchor="middle" transform="rotate(3 1808 910)">A</text>
</svg>
<svg class="abs" style="left:5px;top:5px" width="24" height="24" viewBox="0 0 24 24" fill="none" stroke="#666" stroke-width="1.9" stroke-linecap="round" stroke-linejoin="round"><path d="M2.5 11.5V4.5a2 2 0 0 1 2-2h15a2 2 0 0 1 2 2v15a2 2 0 0 1-2 2h-8.5"/><rect x="1.5" y="15.5" width="6" height="6" rx="1.5"/><path d="M10.5 13.5l7-7M12.5 6.5h5v5"/></svg>
<div class="txt" style="left:594.5px;top:8px;font-size:20.5px;color:#ff5a22">3D</div>
<div class="txt" style="left:9px;top:494px;font-size:18.4px;font-weight:bold;color:#111">3D Scene</div>
<svg class="abs" style="left:594px;top:429px" width="28" height="28" viewBox="0 0 24 24" fill="none" stroke="#666" stroke-width="1.6" stroke-linejoin="round"><path d="M12 2.5l8.5 4.5v10L12 21.5 3.5 17V7z"/><path d="M3.5 7L12 11.5 20.5 7M12 11.5v10"/></svg>
<svg class="abs" style="left:595px;top:468px" width="26" height="26" viewBox="0 0 24 24" fill="none" stroke="#666" stroke-width="2" stroke-linecap="round"><path d="M3 8V4.5A1.5 1.5 0 0 1 4.5 3H8M16 3h3.5A1.5 1.5 0 0 1 21 4.5V8M21 16v3.5a1.5 1.5 0 0 1-1.5 1.5H16M8 21H4.5A1.5 1.5 0 0 1 3 19.5V16"/><circle cx="12" cy="12" r="2.4" fill="#666" stroke="none"/></svg>
<svg class="abs" style="left:594px;top:504px" width="28" height="28" viewBox="0 0 24 24" fill="none" stroke="#666" stroke-width="1.7" stroke-linecap="round"><path d="M15 3.5A8.5 8.5 0 1 0 20.5 15 6.5 6.5 0 0 1 15 3.5z"/></svg></div>
</div>
</div>
<div class="txt" style="left:1037px;top:46px;font-size:8.4px;color:#fff">No data or out of view</div>
<div class="abs" style="left:945px;top:0;width:155px;height:39.5px;background:#fdfdfd"></div>
<svg class="abs" style="left:960px;top:0" width="140" height="40" viewBox="960 0 140 40"><path d="M973 0H999V26Q986 30 973 26Z" fill="#66e866"/><path d="M978 0V26M994 0V26" stroke="#8af08a" stroke-width="3" opacity=".7"/><ellipse cx="986" cy="25" rx="9" ry="3" fill="#8af08a"/><path d="M1026 0H1090V20L1059 31L1026 22Z" fill="#1a1a1a"/><path d="M1036 22L1043 2L1050 22M1038.5 15H1047.5" stroke="#fff" stroke-width="2.4" fill="none"/><path d="M1070 2L1071 19L1080 17" stroke="#fff" stroke-width="2.4" fill="none"/><path d="M1019 0l4 3 3-3z" fill="#66e866"/></svg>
</div>
<div class="abs" style="left:668px;top:0;width:2px;height:60px;background:#22ee22"></div>
</div>
</body></html>
